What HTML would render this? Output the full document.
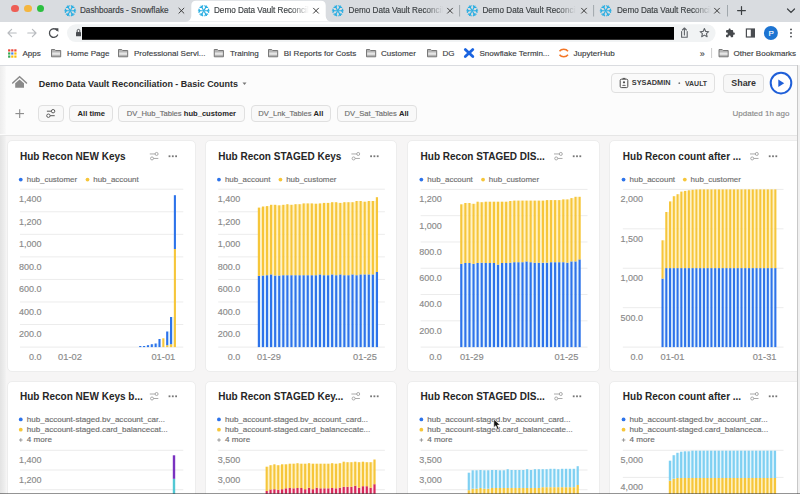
<!DOCTYPE html>
<html><head><meta charset="utf-8"><style>
html,body{margin:0;padding:0}
body{width:800px;height:494px;overflow:hidden;position:relative;background:#fff;font-family:"Liberation Sans",sans-serif}
.r,.t{position:absolute}
.t{white-space:nowrap;-webkit-text-stroke:0.15px currentColor}
b{-webkit-text-stroke:0}
svg.r{overflow:visible}
</style></head><body>
<div class="r" style="left:0px;top:0px;width:800px;height:21.5px;background:#d9dce0;"></div>
<div class="r" style="left:11.3px;top:4.6px;width:7.8px;height:7.8px;border-radius:50%;background:#ee5e55"></div>
<div class="r" style="left:24px;top:4.6px;width:7.8px;height:7.8px;border-radius:50%;background:#f4b63f"></div>
<div class="r" style="left:36.7px;top:4.6px;width:7.8px;height:7.8px;border-radius:50%;background:#2bbf40"></div>
<svg class="r" style="left:0;top:0" width="800" height="22"><path d="M185,21.5 Q191,21.5 191.3,16 L191.3,5.5 Q191.3,0.8 196,0.8 L321,0.8 Q325.7,0.8 325.7,5.5 L325.7,16 Q326,21.5 332,21.5 Z" fill="#fff"/></svg>
<svg class="r" style="left:0;top:0" width="800" height="22"><g stroke="#2aaee2" stroke-width="1.2" stroke-linecap="round"><line x1="71.40" y1="10.75" x2="75.60" y2="10.75"/><line x1="74.20" y1="10.75" x2="75.11" y2="9.16"/><line x1="74.20" y1="10.75" x2="75.11" y2="12.34"/><line x1="70.80" y1="11.79" x2="72.90" y2="15.43"/><line x1="72.20" y1="14.21" x2="74.03" y2="14.21"/><line x1="72.20" y1="14.21" x2="71.28" y2="15.80"/><line x1="69.60" y1="11.79" x2="67.50" y2="15.43"/><line x1="68.20" y1="14.21" x2="69.12" y2="15.80"/><line x1="68.20" y1="14.21" x2="66.37" y2="14.21"/><line x1="69.00" y1="10.75" x2="64.80" y2="10.75"/><line x1="66.20" y1="10.75" x2="65.29" y2="12.34"/><line x1="66.20" y1="10.75" x2="65.29" y2="9.16"/><line x1="69.60" y1="9.71" x2="67.50" y2="6.07"/><line x1="68.20" y1="7.29" x2="66.37" y2="7.29"/><line x1="68.20" y1="7.29" x2="69.12" y2="5.70"/><line x1="70.80" y1="9.71" x2="72.90" y2="6.07"/><line x1="72.20" y1="7.29" x2="71.28" y2="5.70"/><line x1="72.20" y1="7.29" x2="74.03" y2="7.29"/></g><circle cx="70.2" cy="10.75" r="0.9" fill="#2aaee2"/><g stroke="#3c3c3c" stroke-width="1" stroke-linecap="round"><line x1="178.9" y1="8.2" x2="183.9" y2="13.2"/><line x1="183.9" y1="8.2" x2="178.9" y2="13.2"/></g><g stroke="#2aaee2" stroke-width="1.2" stroke-linecap="round"><line x1="205.00" y1="10.75" x2="209.20" y2="10.75"/><line x1="207.80" y1="10.75" x2="208.71" y2="9.16"/><line x1="207.80" y1="10.75" x2="208.71" y2="12.34"/><line x1="204.40" y1="11.79" x2="206.50" y2="15.43"/><line x1="205.80" y1="14.21" x2="207.63" y2="14.21"/><line x1="205.80" y1="14.21" x2="204.88" y2="15.80"/><line x1="203.20" y1="11.79" x2="201.10" y2="15.43"/><line x1="201.80" y1="14.21" x2="202.72" y2="15.80"/><line x1="201.80" y1="14.21" x2="199.97" y2="14.21"/><line x1="202.60" y1="10.75" x2="198.40" y2="10.75"/><line x1="199.80" y1="10.75" x2="198.89" y2="12.34"/><line x1="199.80" y1="10.75" x2="198.89" y2="9.16"/><line x1="203.20" y1="9.71" x2="201.10" y2="6.07"/><line x1="201.80" y1="7.29" x2="199.97" y2="7.29"/><line x1="201.80" y1="7.29" x2="202.72" y2="5.70"/><line x1="204.40" y1="9.71" x2="206.50" y2="6.07"/><line x1="205.80" y1="7.29" x2="204.88" y2="5.70"/><line x1="205.80" y1="7.29" x2="207.63" y2="7.29"/></g><circle cx="203.79999999999998" cy="10.75" r="0.9" fill="#2aaee2"/><g stroke="#3c3c3c" stroke-width="1" stroke-linecap="round"><line x1="313.5" y1="8.2" x2="318.5" y2="13.2"/><line x1="318.5" y1="8.2" x2="313.5" y2="13.2"/></g><g stroke="#2aaee2" stroke-width="1.2" stroke-linecap="round"><line x1="339.00" y1="10.75" x2="343.20" y2="10.75"/><line x1="341.80" y1="10.75" x2="342.71" y2="9.16"/><line x1="341.80" y1="10.75" x2="342.71" y2="12.34"/><line x1="338.40" y1="11.79" x2="340.50" y2="15.43"/><line x1="339.80" y1="14.21" x2="341.63" y2="14.21"/><line x1="339.80" y1="14.21" x2="338.88" y2="15.80"/><line x1="337.20" y1="11.79" x2="335.10" y2="15.43"/><line x1="335.80" y1="14.21" x2="336.72" y2="15.80"/><line x1="335.80" y1="14.21" x2="333.97" y2="14.21"/><line x1="336.60" y1="10.75" x2="332.40" y2="10.75"/><line x1="333.80" y1="10.75" x2="332.89" y2="12.34"/><line x1="333.80" y1="10.75" x2="332.89" y2="9.16"/><line x1="337.20" y1="9.71" x2="335.10" y2="6.07"/><line x1="335.80" y1="7.29" x2="333.97" y2="7.29"/><line x1="335.80" y1="7.29" x2="336.72" y2="5.70"/><line x1="338.40" y1="9.71" x2="340.50" y2="6.07"/><line x1="339.80" y1="7.29" x2="338.88" y2="5.70"/><line x1="339.80" y1="7.29" x2="341.63" y2="7.29"/></g><circle cx="337.8" cy="10.75" r="0.9" fill="#2aaee2"/><g stroke="#3c3c3c" stroke-width="1" stroke-linecap="round"><line x1="447.5" y1="8.2" x2="452.5" y2="13.2"/><line x1="452.5" y1="8.2" x2="447.5" y2="13.2"/></g><g stroke="#2aaee2" stroke-width="1.2" stroke-linecap="round"><line x1="473.40" y1="10.75" x2="477.60" y2="10.75"/><line x1="476.20" y1="10.75" x2="477.11" y2="9.16"/><line x1="476.20" y1="10.75" x2="477.11" y2="12.34"/><line x1="472.80" y1="11.79" x2="474.90" y2="15.43"/><line x1="474.20" y1="14.21" x2="476.03" y2="14.21"/><line x1="474.20" y1="14.21" x2="473.28" y2="15.80"/><line x1="471.60" y1="11.79" x2="469.50" y2="15.43"/><line x1="470.20" y1="14.21" x2="471.12" y2="15.80"/><line x1="470.20" y1="14.21" x2="468.37" y2="14.21"/><line x1="471.00" y1="10.75" x2="466.80" y2="10.75"/><line x1="468.20" y1="10.75" x2="467.29" y2="12.34"/><line x1="468.20" y1="10.75" x2="467.29" y2="9.16"/><line x1="471.60" y1="9.71" x2="469.50" y2="6.07"/><line x1="470.20" y1="7.29" x2="468.37" y2="7.29"/><line x1="470.20" y1="7.29" x2="471.12" y2="5.70"/><line x1="472.80" y1="9.71" x2="474.90" y2="6.07"/><line x1="474.20" y1="7.29" x2="473.28" y2="5.70"/><line x1="474.20" y1="7.29" x2="476.03" y2="7.29"/></g><circle cx="472.2" cy="10.75" r="0.9" fill="#2aaee2"/><g stroke="#3c3c3c" stroke-width="1" stroke-linecap="round"><line x1="581.5" y1="8.2" x2="586.5" y2="13.2"/><line x1="586.5" y1="8.2" x2="581.5" y2="13.2"/></g><g stroke="#2aaee2" stroke-width="1.2" stroke-linecap="round"><line x1="606.90" y1="10.75" x2="611.10" y2="10.75"/><line x1="609.70" y1="10.75" x2="610.61" y2="9.16"/><line x1="609.70" y1="10.75" x2="610.61" y2="12.34"/><line x1="606.30" y1="11.79" x2="608.40" y2="15.43"/><line x1="607.70" y1="14.21" x2="609.53" y2="14.21"/><line x1="607.70" y1="14.21" x2="606.78" y2="15.80"/><line x1="605.10" y1="11.79" x2="603.00" y2="15.43"/><line x1="603.70" y1="14.21" x2="604.62" y2="15.80"/><line x1="603.70" y1="14.21" x2="601.87" y2="14.21"/><line x1="604.50" y1="10.75" x2="600.30" y2="10.75"/><line x1="601.70" y1="10.75" x2="600.79" y2="12.34"/><line x1="601.70" y1="10.75" x2="600.79" y2="9.16"/><line x1="605.10" y1="9.71" x2="603.00" y2="6.07"/><line x1="603.70" y1="7.29" x2="601.87" y2="7.29"/><line x1="603.70" y1="7.29" x2="604.62" y2="5.70"/><line x1="606.30" y1="9.71" x2="608.40" y2="6.07"/><line x1="607.70" y1="7.29" x2="606.78" y2="5.70"/><line x1="607.70" y1="7.29" x2="609.53" y2="7.29"/></g><circle cx="605.7" cy="10.75" r="0.9" fill="#2aaee2"/><g stroke="#3c3c3c" stroke-width="1" stroke-linecap="round"><line x1="714.5" y1="8.2" x2="719.5" y2="13.2"/><line x1="719.5" y1="8.2" x2="714.5" y2="13.2"/></g><line x1="459.6" y1="5" x2="459.6" y2="16.5" stroke="#9aa0a6" stroke-width="0.9"/><line x1="593.6" y1="5" x2="593.6" y2="16.5" stroke="#9aa0a6" stroke-width="0.9"/><line x1="727.5" y1="5" x2="727.5" y2="16.5" stroke="#9aa0a6" stroke-width="0.9"/><g stroke="#3c4043" stroke-width="1.2" stroke-linecap="round"><line x1="737.6" y1="10.6" x2="745.4" y2="10.6"/><line x1="741.5" y1="6.7" x2="741.5" y2="14.5"/></g><path d="M787.5,9 L791,12.5 L794.5,9" fill="none" stroke="#3c4043" stroke-width="1.2" stroke-linecap="round"/></svg>
<div class="t" style="left:80px;top:6.11px;font-size:8.15px;line-height:9.78px;color:#3c4043;font-weight:normal;">Dashboards - Snowflake</div>
<div class="t" style="left:214px;top:5.9px;width:95px;overflow:hidden;font-size:8.15px;line-height:10.2px;color:#3c4043;-webkit-mask-image:linear-gradient(90deg,#000 80%,transparent 100%)">Demo Data Vault Reconciliation</div>
<div class="t" style="left:348.6px;top:5.9px;width:94px;overflow:hidden;font-size:8.15px;line-height:10.2px;color:#3c4043;-webkit-mask-image:linear-gradient(90deg,#000 80%,transparent 100%)">Demo Data Vault Reconciliation</div>
<div class="t" style="left:482.4px;top:5.9px;width:94px;overflow:hidden;font-size:8.15px;line-height:10.2px;color:#3c4043;-webkit-mask-image:linear-gradient(90deg,#000 80%,transparent 100%)">Demo Data Vault Reconciliation</div>
<div class="t" style="left:617px;top:5.9px;width:94px;overflow:hidden;font-size:8.15px;line-height:10.2px;color:#3c4043;-webkit-mask-image:linear-gradient(90deg,#000 80%,transparent 100%)">Demo Data Vault Reconciliation</div>
<div class="r" style="left:0px;top:21.5px;width:800px;height:43px;background:#ffffff;"></div>
<svg class="r" style="left:0;top:0" width="800" height="66"><g fill="none" stroke="#b8bbbf" stroke-width="1.2" stroke-linecap="round" stroke-linejoin="round"><path d="M16.2,33 L8,33 M11.6,29.4 L8,33 L11.6,36.6"/><path d="M27.8,33 L36,33 M32.4,29.4 L36,33 L32.4,36.6"/></g><g fill="none" stroke="#4a4d51" stroke-width="1.3" stroke-linecap="round"><path d="M57,30.2 A4.3,4.3 0 1 0 57.6,35"/></g><path d="M54.6,28.2 L58.4,28.2 L58.4,32 Z" fill="#4a4d51"/><rect x="67" y="24.2" width="648.6" height="17.8" rx="8.9" fill="#f1f3f4"/><rect x="76" y="32" width="5" height="4.3" rx="0.6" fill="#4a4d51"/><path d="M77.2,32 V30.7 A1.3,1.3 0 0 1 79.8,30.7 V32" fill="none" stroke="#4a4d51" stroke-width="1"/><rect x="82" y="27" width="592" height="12.8" fill="#000"/><g fill="none" stroke="#5f6368" stroke-width="1.1" stroke-linecap="round" stroke-linejoin="round"><path d="M681.6,31.5 V37.2 H687.2 V31.5"/><path d="M684.4,35 V28 M682.4,30 L684.4,28 L686.4,30"/></g><path d="M704.4,28.6 L705.7,31.4 L708.7,31.7 L706.4,33.7 L707.1,36.7 L704.4,35.1 L701.7,36.7 L702.4,33.7 L700.1,31.7 L703.1,31.4 Z" fill="none" stroke="#5f6368" stroke-width="1.1" stroke-linejoin="round"/><g transform="translate(725.2,28) scale(0.42)"><path d="M20.5 11H19V7c0-1.1-.9-2-2-2h-4V3.5C13 2.12 11.88 1 10.5 1S8 2.12 8 3.5V5H4c-1.1 0-1.99.9-1.99 2v3.8H3.5c1.49 0 2.7 1.21 2.7 2.7s-1.21 2.7-2.7 2.7H2V20c0 1.1.9 2 2 2h3.8v-1.5c0-1.49 1.210-2.7 2.7-2.7 1.49 0 2.7 1.21 2.7 2.7V22H17c1.1 0 2-.9 2-2v-4h1.5c1.38 0 2.5-1.12 2.5-2.5S21.88 11 20.5 11z" fill="#45484c"/></g><rect x="746.4" y="29" width="8" height="8" fill="none" stroke="#4a4d51" stroke-width="1.2"/><rect x="750.8" y="29" width="3.6" height="8" fill="#4a4d51"/><circle cx="770.9" cy="33" r="7" fill="#1d74d2"/><g fill="#4a4d51"><circle cx="791" cy="29.4" r="0.95"/><circle cx="791" cy="33" r="0.95"/><circle cx="791" cy="36.6" r="0.95"/></g></svg>
<div class="t" style="left:768.4px;top:28.6px;font-size:8px;line-height:9.6px;color:#fff;font-weight:normal;">P</div>
<div class="r" style="left:0px;top:64.8px;width:800px;height:1px;background:#dadce0;"></div>
<svg class="r" style="left:0;top:0" width="800" height="66"><rect x="8.10" y="49.30" width="2.2" height="2.2" fill="#ea4335"/><rect x="11.20" y="49.30" width="2.2" height="2.2" fill="#ea4335"/><rect x="14.30" y="49.30" width="2.2" height="2.2" fill="#ea4335"/><rect x="8.10" y="52.40" width="2.2" height="2.2" fill="#34a853"/><rect x="11.20" y="52.40" width="2.2" height="2.2" fill="#4285f4"/><rect x="14.30" y="52.40" width="2.2" height="2.2" fill="#fbbc05"/><rect x="8.10" y="55.50" width="2.2" height="2.2" fill="#34a853"/><rect x="11.20" y="55.50" width="2.2" height="2.2" fill="#fbbc05"/><rect x="14.30" y="55.50" width="2.2" height="2.2" fill="#fbbc05"/><path d="M51.5,49.5 h3.2 l1,1 h5 v6.3 h-9.2 Z" fill="#b4b4b4" stroke="#6e6e6e" stroke-width="0.9" stroke-linejoin="round"/><rect x="52.2" y="52.5" width="7.8" height="2.3" fill="#e6e6e6"/><path d="M118.5,49.5 h3.2 l1,1 h5 v6.3 h-9.2 Z" fill="#b4b4b4" stroke="#6e6e6e" stroke-width="0.9" stroke-linejoin="round"/><rect x="119.2" y="52.5" width="7.8" height="2.3" fill="#e6e6e6"/><path d="M214.25,49.5 h3.2 l1,1 h5 v6.3 h-9.2 Z" fill="#b4b4b4" stroke="#6e6e6e" stroke-width="0.9" stroke-linejoin="round"/><rect x="214.95" y="52.5" width="7.8" height="2.3" fill="#e6e6e6"/><path d="M268.5,49.5 h3.2 l1,1 h5 v6.3 h-9.2 Z" fill="#b4b4b4" stroke="#6e6e6e" stroke-width="0.9" stroke-linejoin="round"/><rect x="269.2" y="52.5" width="7.8" height="2.3" fill="#e6e6e6"/><path d="M366.5,49.5 h3.2 l1,1 h5 v6.3 h-9.2 Z" fill="#b4b4b4" stroke="#6e6e6e" stroke-width="0.9" stroke-linejoin="round"/><rect x="367.2" y="52.5" width="7.8" height="2.3" fill="#e6e6e6"/><path d="M427.5,49.5 h3.2 l1,1 h5 v6.3 h-9.2 Z" fill="#b4b4b4" stroke="#6e6e6e" stroke-width="0.9" stroke-linejoin="round"/><rect x="428.2" y="52.5" width="7.8" height="2.3" fill="#e6e6e6"/><path d="M719.0,49.5 h3.2 l1,1 h5 v6.3 h-9.2 Z" fill="#b4b4b4" stroke="#6e6e6e" stroke-width="0.9" stroke-linejoin="round"/><rect x="719.7" y="52.5" width="7.8" height="2.3" fill="#e6e6e6"/><g stroke="#1a64e0" stroke-width="2.8" stroke-linecap="round"><line x1="465.3" y1="49.6" x2="472.8" y2="56.6"/><line x1="472.8" y1="49.6" x2="465.3" y2="56.6"/></g><path d="M559.5,51.2 A5,4 0 0 1 568,51.2" fill="none" stroke="#f37626" stroke-width="1.5"/><path d="M559.5,54.8 A5,4 0 0 0 568,54.8" fill="none" stroke="#f37626" stroke-width="1.5"/><line x1="711.6" y1="48" x2="711.6" y2="58" stroke="#c6c6c6" stroke-width="0.9"/></svg>
<div class="t" style="left:22.5px;top:48.97px;font-size:8.05px;line-height:9.66px;color:#3c4043;font-weight:normal;">Apps</div>
<div class="t" style="left:67px;top:48.97px;font-size:8.05px;line-height:9.66px;color:#3c4043;font-weight:normal;">Home Page</div>
<div class="t" style="left:134px;top:48.97px;font-size:8.05px;line-height:9.66px;color:#3c4043;font-weight:normal;">Professional Servi...</div>
<div class="t" style="left:230px;top:48.97px;font-size:8.05px;line-height:9.66px;color:#3c4043;font-weight:normal;">Training</div>
<div class="t" style="left:283.75px;top:48.97px;font-size:8.05px;line-height:9.66px;color:#3c4043;font-weight:normal;">BI Reports for Costs</div>
<div class="t" style="left:381px;top:48.97px;font-size:8.05px;line-height:9.66px;color:#3c4043;font-weight:normal;">Customer</div>
<div class="t" style="left:442.5px;top:48.97px;font-size:8.05px;line-height:9.66px;color:#3c4043;font-weight:normal;">DG</div>
<div class="t" style="left:479.5px;top:48.97px;font-size:8.05px;line-height:9.66px;color:#3c4043;font-weight:normal;">Snowflake Termin...</div>
<div class="t" style="left:573.5px;top:48.97px;font-size:8.05px;line-height:9.66px;color:#3c4043;font-weight:normal;">JupyterHub</div>
<div class="t" style="left:733.5px;top:48.97px;font-size:8.05px;line-height:9.66px;color:#3c4043;font-weight:normal;">Other Bookmarks</div>
<div class="t" style="left:699.8px;top:48.6px;font-size:9px;line-height:10.8px;color:#3c4043;font-weight:normal;">»</div>
<div class="r" style="left:0px;top:65.8px;width:800px;height:68.9px;background:#fcfcfc;"></div>
<div class="r" style="left:0px;top:134.5px;width:797px;height:1.2px;background:#e6e6e6;"></div>
<div class="r" style="left:0px;top:135.7px;width:797px;height:358.3px;background:#f6f5f5;"></div>
<svg class="r" style="left:0;top:0" width="800" height="140"><path d="M12.7,83 L19.6,76.7 L26.5,83" fill="none" stroke="#8a8a8a" stroke-width="1.5" stroke-linecap="round"/><path d="M15.2,83.3 L19.6,79.4 L24,83.3 V87.7 H15.2 Z" fill="#8a8a8a"/><path d="M242.5,82.5 L246.5,82.5 L244.5,85 Z" fill="#777"/><g stroke="#8a8a8a" stroke-width="1.1"><line x1="15.4" y1="113.6" x2="24" y2="113.6"/><line x1="19.7" y1="109.3" x2="19.7" y2="117.9"/></g></svg>
<div class="t" style="left:38.8px;top:79.03px;font-size:8.95px;line-height:10.74px;color:#2a2a2a;font-weight:bold;-webkit-text-stroke:0;">Demo Data Vault Reconciliation - Basic Counts</div>
<div class="r" style="left:611.4px;top:73.4px;width:103.6px;height:19.3px;background:#fafafa;border:1px solid #e0e0e0;box-sizing:border-box;border-radius:4px"></div>
<div class="r" style="left:723.3px;top:73.6px;width:40.3px;height:19.5px;background:#f7f7f7;border:1px solid #e0e0e0;box-sizing:border-box;border-radius:4px"></div>
<svg class="r" style="left:0;top:0" width="800" height="140"><rect x="620.2" y="79.2" width="7.6" height="8.4" rx="1.2" fill="none" stroke="#4a4a4a" stroke-width="1"/><line x1="622.6" y1="78.4" x2="625.4" y2="78.4" stroke="#4a4a4a" stroke-width="1"/><circle cx="624" cy="82.3" r="1.1" fill="#4a4a4a"/><path d="M621.9,85.8 Q624,83.9 626.1,85.8" fill="#4a4a4a"/><circle cx="679.3" cy="83.2" r="0.9" fill="#777"/><circle cx="781" cy="83.1" r="10.3" fill="#fff" stroke="#1f5fd8" stroke-width="2"/><path d="M778.3,79.6 L784.2,83.3 L778.3,87 Z" fill="#1f5fd8"/></svg>
<div class="t" style="left:631.8px;top:79.39px;font-size:7.35px;line-height:8.82px;color:#3a3a3a;font-weight:bold;-webkit-text-stroke:0;">SYSADMIN</div>
<div class="t" style="left:685px;top:79.63px;font-size:6.95px;line-height:8.34px;color:#3a3a3a;font-weight:bold;-webkit-text-stroke:0;">VAULT</div>
<div class="t" style="left:731.3px;top:78.46px;font-size:8.9px;line-height:10.68px;color:#333;font-weight:bold;-webkit-text-stroke:0;">Share</div>
<div class="r" style="left:37.5px;top:105px;width:26.3px;height:17.4px;background:#f9f9f9;border:1px solid #e0e0e0;box-sizing:border-box;border-radius:4px"></div>
<div class="r" style="left:69.4px;top:105px;width:44.1px;height:17.4px;background:#f9f9f9;border:1px solid #e0e0e0;box-sizing:border-box;border-radius:4px"></div>
<div class="r" style="left:118px;top:105px;width:126.5px;height:17.4px;background:#f9f9f9;border:1px solid #e0e0e0;box-sizing:border-box;border-radius:4px"></div>
<div class="r" style="left:250.5px;top:105px;width:80.25px;height:17.4px;background:#f9f9f9;border:1px solid #e0e0e0;box-sizing:border-box;border-radius:4px"></div>
<div class="r" style="left:336.75px;top:105px;width:80px;height:17.4px;background:#f9f9f9;border:1px solid #e0e0e0;box-sizing:border-box;border-radius:4px"></div>
<svg class="r" style="left:0;top:0" width="800" height="140"><g fill="none" stroke="#5a5a5a" stroke-width="1"><line x1="46.9" y1="111.2" x2="51.4" y2="111.2"/><circle cx="53.1" cy="111.2" r="1.7" fill="#fff"/><line x1="50.1" y1="115.7" x2="54.7" y2="115.7"/><circle cx="48.4" cy="115.7" r="1.7" fill="#fff"/></g></svg>
<div class="t" style="left:77.6px;top:109.24px;font-size:7.6px;line-height:9.12px;color:#262626;font-weight:bold;-webkit-text-stroke:0;">All time</div>
<div class="t" style="left:126.75px;top:109.2px;font-size:7.6px;line-height:9.2px;color:#6e6e6e">DV_Hub_Tables <b style="color:#262626">hub_customer</b></div>
<div class="t" style="left:258.25px;top:109.2px;font-size:7.6px;line-height:9.2px;color:#6e6e6e">DV_Lnk_Tables <b style="color:#262626">All</b></div>
<div class="t" style="left:344.5px;top:109.2px;font-size:7.6px;line-height:9.2px;color:#6e6e6e">DV_Sat_Tables <b style="color:#262626">All</b></div>
<div class="t" style="left:732.5px;top:109.2px;font-size:8px;line-height:9.6px;color:#8a8a8a;font-weight:normal;">Updated 1h ago</div>
<div class="r" style="left:6.5px;top:140.4px;width:189.3px;height:231.6px;background:#fff;border:1px solid #ededed;box-sizing:border-box;border-radius:5px"></div>
<div class="r" style="left:204.7px;top:140.4px;width:192.7px;height:231.6px;background:#fff;border:1px solid #ededed;box-sizing:border-box;border-radius:5px"></div>
<div class="r" style="left:407.1px;top:140.4px;width:192.9px;height:231.6px;background:#fff;border:1px solid #ededed;box-sizing:border-box;border-radius:5px"></div>
<div class="r" style="left:609.3px;top:140.4px;width:196.7px;height:231.6px;background:#fff;border:1px solid #ededed;box-sizing:border-box;border-radius:5px"></div>
<div class="t" style="left:20px;top:151.25px;font-size:10px;line-height:12px;color:#262626;font-weight:bold;-webkit-text-stroke:0;">Hub Recon NEW Keys</div>
<svg class="r" style="left:0;top:0" width="800" height="494"><g fill="none" stroke="#a0a0a0" stroke-width="0.9"><line x1="149.8" y1="153.95" x2="155.8" y2="153.95"/><circle cx="156.60000000000002" cy="153.95" r="1.5" fill="#fff"/><line x1="151.8" y1="158.45" x2="158.3" y2="158.45"/><circle cx="152.0" cy="158.45" r="1.5" fill="#fff"/></g><g fill="#777"><rect x="168.60000000000002" y="155.35" width="1.8" height="1.8"/><rect x="171.9" y="155.35" width="1.8" height="1.8"/><rect x="175.20000000000002" y="155.35" width="1.8" height="1.8"/></g></svg>
<div class="t" style="left:218.2px;top:151.25px;font-size:10px;line-height:12px;color:#262626;font-weight:bold;-webkit-text-stroke:0;">Hub Recon STAGED Keys</div>
<svg class="r" style="left:0;top:0" width="800" height="494"><g fill="none" stroke="#a0a0a0" stroke-width="0.9"><line x1="351.4" y1="153.95" x2="357.4" y2="153.95"/><circle cx="358.2" cy="153.95" r="1.5" fill="#fff"/><line x1="353.4" y1="158.45" x2="359.9" y2="158.45"/><circle cx="353.59999999999997" cy="158.45" r="1.5" fill="#fff"/></g><g fill="#777"><rect x="370.2" y="155.35" width="1.8" height="1.8"/><rect x="373.5" y="155.35" width="1.8" height="1.8"/><rect x="376.79999999999995" y="155.35" width="1.8" height="1.8"/></g></svg>
<div class="t" style="left:420.6px;top:151.25px;font-size:10px;line-height:12px;color:#262626;font-weight:bold;-webkit-text-stroke:0;">Hub Recon STAGED DIS...</div>
<svg class="r" style="left:0;top:0" width="800" height="494"><g fill="none" stroke="#a0a0a0" stroke-width="0.9"><line x1="554.0" y1="153.95" x2="560.0" y2="153.95"/><circle cx="560.8" cy="153.95" r="1.5" fill="#fff"/><line x1="556.0" y1="158.45" x2="562.5" y2="158.45"/><circle cx="556.2" cy="158.45" r="1.5" fill="#fff"/></g><g fill="#777"><rect x="572.8" y="155.35" width="1.8" height="1.8"/><rect x="576.1" y="155.35" width="1.8" height="1.8"/><rect x="579.4" y="155.35" width="1.8" height="1.8"/></g></svg>
<div class="t" style="left:622.8px;top:151.25px;font-size:10px;line-height:12px;color:#262626;font-weight:bold;-webkit-text-stroke:0;">Hub Recon count after ...</div>
<svg class="r" style="left:0;top:0" width="800" height="494"><g fill="none" stroke="#a0a0a0" stroke-width="0.9"><line x1="750.0" y1="153.95" x2="756.0" y2="153.95"/><circle cx="756.8" cy="153.95" r="1.5" fill="#fff"/><line x1="752.0" y1="158.45" x2="758.5" y2="158.45"/><circle cx="752.2" cy="158.45" r="1.5" fill="#fff"/></g><g fill="#777"><rect x="768.8" y="155.35" width="1.8" height="1.8"/><rect x="772.1" y="155.35" width="1.8" height="1.8"/><rect x="775.4" y="155.35" width="1.8" height="1.8"/></g></svg>
<svg class="r" style="left:0;top:0" width="800" height="494"><circle cx="20.75" cy="179.6" r="1.9" fill="#2d73ea"/><circle cx="87.5" cy="179.6" r="1.9" fill="#f6c63a"/></svg>
<div class="t" style="left:26.75px;top:174.83px;font-size:7.95px;line-height:9.54px;color:#6e6e6e;font-weight:normal;">hub_customer</div>
<div class="t" style="left:93.25px;top:174.83px;font-size:7.95px;line-height:9.54px;color:#6e6e6e;font-weight:normal;">hub_account</div>
<svg class="r" style="left:0;top:0" width="800" height="494"><circle cx="218.95" cy="179.6" r="1.9" fill="#2d73ea"/><circle cx="280.45" cy="179.6" r="1.9" fill="#f6c63a"/></svg>
<div class="t" style="left:224.95px;top:174.83px;font-size:7.95px;line-height:9.54px;color:#6e6e6e;font-weight:normal;">hub_account</div>
<div class="t" style="left:286.2px;top:174.83px;font-size:7.95px;line-height:9.54px;color:#6e6e6e;font-weight:normal;">hub_customer</div>
<svg class="r" style="left:0;top:0" width="800" height="494"><circle cx="421.35" cy="179.6" r="1.9" fill="#2d73ea"/><circle cx="483.05" cy="179.6" r="1.9" fill="#f6c63a"/></svg>
<div class="t" style="left:427.35px;top:174.83px;font-size:7.95px;line-height:9.54px;color:#6e6e6e;font-weight:normal;">hub_account</div>
<div class="t" style="left:488.8px;top:174.83px;font-size:7.95px;line-height:9.54px;color:#6e6e6e;font-weight:normal;">hub_customer</div>
<svg class="r" style="left:0;top:0" width="800" height="494"><circle cx="623.55" cy="179.6" r="1.9" fill="#2d73ea"/><circle cx="684.8" cy="179.6" r="1.9" fill="#f6c63a"/></svg>
<div class="t" style="left:629.55px;top:174.83px;font-size:7.95px;line-height:9.54px;color:#6e6e6e;font-weight:normal;">hub_account</div>
<div class="t" style="left:690.55px;top:174.83px;font-size:7.95px;line-height:9.54px;color:#6e6e6e;font-weight:normal;">hub_customer</div>
<svg class="r" style="left:0;top:0" width="800" height="494"><rect x="20.0" y="188.7" width="163.3" height="1" fill="#ececec"/><rect x="20.0" y="211.25714285714284" width="163.3" height="1" fill="#ececec"/><rect x="20.0" y="233.81428571428572" width="163.3" height="1" fill="#ececec"/><rect x="20.0" y="256.37142857142857" width="163.3" height="1" fill="#ececec"/><rect x="20.0" y="278.92857142857144" width="163.3" height="1" fill="#ececec"/><rect x="20.0" y="301.4857142857143" width="163.3" height="1" fill="#ececec"/><rect x="20.0" y="324.0428571428572" width="163.3" height="1" fill="#ececec"/><rect x="20.0" y="346.6" width="163.3" height="1" fill="#ececec"/></svg>
<div class="t" style="left:1.6px;width:40px;text-align:right;top:194.1px;font-size:9px;line-height:10.8px;color:#8a8a8a">1,400</div>
<div class="t" style="left:1.6px;width:40px;text-align:right;top:216.66px;font-size:9px;line-height:10.8px;color:#8a8a8a">1,200</div>
<div class="t" style="left:1.6px;width:40px;text-align:right;top:239.21px;font-size:9px;line-height:10.8px;color:#8a8a8a">1,000</div>
<div class="t" style="left:1.6px;width:40px;text-align:right;top:261.77px;font-size:9px;line-height:10.8px;color:#8a8a8a">800.0</div>
<div class="t" style="left:1.6px;width:40px;text-align:right;top:284.33px;font-size:9px;line-height:10.8px;color:#8a8a8a">600.0</div>
<div class="t" style="left:1.6px;width:40px;text-align:right;top:306.89px;font-size:9px;line-height:10.8px;color:#8a8a8a">400.0</div>
<div class="t" style="left:1.6px;width:40px;text-align:right;top:329.44px;font-size:9px;line-height:10.8px;color:#8a8a8a">200.0</div>
<div class="t" style="left:1.6px;width:40px;text-align:right;top:352px;font-size:9px;line-height:10.8px;color:#8a8a8a">0.0</div>
<svg class="r" style="left:0;top:0" width="800" height="494"><rect x="218.2" y="188.7" width="166.7" height="1" fill="#ececec"/><rect x="218.2" y="211.25714285714284" width="166.7" height="1" fill="#ececec"/><rect x="218.2" y="233.81428571428572" width="166.7" height="1" fill="#ececec"/><rect x="218.2" y="256.37142857142857" width="166.7" height="1" fill="#ececec"/><rect x="218.2" y="278.92857142857144" width="166.7" height="1" fill="#ececec"/><rect x="218.2" y="301.4857142857143" width="166.7" height="1" fill="#ececec"/><rect x="218.2" y="324.0428571428572" width="166.7" height="1" fill="#ececec"/><rect x="218.2" y="346.6" width="166.7" height="1" fill="#ececec"/></svg>
<div class="t" style="left:200.2px;width:40px;text-align:right;top:194.1px;font-size:9px;line-height:10.8px;color:#8a8a8a">1,400</div>
<div class="t" style="left:200.2px;width:40px;text-align:right;top:216.66px;font-size:9px;line-height:10.8px;color:#8a8a8a">1,200</div>
<div class="t" style="left:200.2px;width:40px;text-align:right;top:239.21px;font-size:9px;line-height:10.8px;color:#8a8a8a">1,000</div>
<div class="t" style="left:200.2px;width:40px;text-align:right;top:261.77px;font-size:9px;line-height:10.8px;color:#8a8a8a">800.0</div>
<div class="t" style="left:200.2px;width:40px;text-align:right;top:284.33px;font-size:9px;line-height:10.8px;color:#8a8a8a">600.0</div>
<div class="t" style="left:200.2px;width:40px;text-align:right;top:306.89px;font-size:9px;line-height:10.8px;color:#8a8a8a">400.0</div>
<div class="t" style="left:200.2px;width:40px;text-align:right;top:329.44px;font-size:9px;line-height:10.8px;color:#8a8a8a">200.0</div>
<div class="t" style="left:200.2px;width:40px;text-align:right;top:352px;font-size:9px;line-height:10.8px;color:#8a8a8a">0.0</div>
<svg class="r" style="left:0;top:0" width="800" height="494"><rect x="420.6" y="188.9" width="166.89999999999998" height="1" fill="#ececec"/><rect x="420.6" y="215.18333333333334" width="166.89999999999998" height="1" fill="#ececec"/><rect x="420.6" y="241.46666666666667" width="166.89999999999998" height="1" fill="#ececec"/><rect x="420.6" y="267.75" width="166.89999999999998" height="1" fill="#ececec"/><rect x="420.6" y="294.03333333333336" width="166.89999999999998" height="1" fill="#ececec"/><rect x="420.6" y="320.3166666666667" width="166.89999999999998" height="1" fill="#ececec"/><rect x="420.6" y="346.6" width="166.89999999999998" height="1" fill="#ececec"/></svg>
<div class="t" style="left:401.8px;width:40px;text-align:right;top:194.3px;font-size:9px;line-height:10.8px;color:#8a8a8a">1,200</div>
<div class="t" style="left:401.8px;width:40px;text-align:right;top:220.58px;font-size:9px;line-height:10.8px;color:#8a8a8a">1,000</div>
<div class="t" style="left:401.8px;width:40px;text-align:right;top:246.87px;font-size:9px;line-height:10.8px;color:#8a8a8a">800.0</div>
<div class="t" style="left:401.8px;width:40px;text-align:right;top:273.15px;font-size:9px;line-height:10.8px;color:#8a8a8a">600.0</div>
<div class="t" style="left:401.8px;width:40px;text-align:right;top:299.43px;font-size:9px;line-height:10.8px;color:#8a8a8a">400.0</div>
<div class="t" style="left:401.8px;width:40px;text-align:right;top:325.72px;font-size:9px;line-height:10.8px;color:#8a8a8a">200.0</div>
<div class="t" style="left:401.8px;width:40px;text-align:right;top:352px;font-size:9px;line-height:10.8px;color:#8a8a8a">0.0</div>
<svg class="r" style="left:0;top:0" width="800" height="494"><rect x="622.8" y="188.9" width="160.70000000000005" height="1" fill="#ececec"/><rect x="622.8" y="228.32500000000002" width="160.70000000000005" height="1" fill="#ececec"/><rect x="622.8" y="267.75" width="160.70000000000005" height="1" fill="#ececec"/><rect x="622.8" y="307.175" width="160.70000000000005" height="1" fill="#ececec"/><rect x="622.8" y="346.6" width="160.70000000000005" height="1" fill="#ececec"/></svg>
<div class="t" style="left:603px;width:40px;text-align:right;top:194.3px;font-size:9px;line-height:10.8px;color:#8a8a8a">2,000</div>
<div class="t" style="left:603px;width:40px;text-align:right;top:233.73px;font-size:9px;line-height:10.8px;color:#8a8a8a">1,500</div>
<div class="t" style="left:603px;width:40px;text-align:right;top:273.15px;font-size:9px;line-height:10.8px;color:#8a8a8a">1,000</div>
<div class="t" style="left:603px;width:40px;text-align:right;top:312.58px;font-size:9px;line-height:10.8px;color:#8a8a8a">500.0</div>
<div class="t" style="left:603px;width:40px;text-align:right;top:352px;font-size:9px;line-height:10.8px;color:#8a8a8a">0.0</div>
<div class="t" style="left:50px;width:40px;text-align:center;top:352px;font-size:9.3px;line-height:11px;color:#8a8a8a">01-02</div>
<div class="t" style="left:143.35px;width:40px;text-align:center;top:352px;font-size:9.3px;line-height:11px;color:#8a8a8a">01-01</div>
<div class="t" style="left:249px;width:40px;text-align:center;top:352px;font-size:9.3px;line-height:11px;color:#8a8a8a">01-29</div>
<div class="t" style="left:345px;width:40px;text-align:center;top:352px;font-size:9.3px;line-height:11px;color:#8a8a8a">01-25</div>
<div class="t" style="left:451.8px;width:40px;text-align:center;top:352px;font-size:9.3px;line-height:11px;color:#8a8a8a">01-29</div>
<div class="t" style="left:546.5px;width:40px;text-align:center;top:352px;font-size:9.3px;line-height:11px;color:#8a8a8a">01-25</div>
<div class="t" style="left:652.5px;width:40px;text-align:center;top:352px;font-size:9.3px;line-height:11px;color:#8a8a8a">01-01</div>
<div class="t" style="left:744.6px;width:40px;text-align:center;top:352px;font-size:9.3px;line-height:11px;color:#8a8a8a">01-31</div>
<svg class="r" style="left:0;top:0" width="800" height="494"><rect x="141.30" y="346.00" width="1.75" height="1.10" fill="#e2f3fc"/><rect x="145.15" y="346.00" width="1.75" height="1.10" fill="#e2f3fc"/><rect x="149.00" y="345.20" width="1.75" height="1.90" fill="#e2f3fc"/><rect x="152.85" y="344.20" width="1.75" height="2.90" fill="#e2f3fc"/><rect x="156.70" y="343.50" width="1.75" height="3.60" fill="#e2f3fc"/><rect x="168.25" y="345.20" width="1.75" height="1.90" fill="#fff2c4"/><rect x="168.25" y="331.50" width="1.75" height="13.70" fill="#e2f3fc"/><rect x="172.10" y="344.20" width="1.75" height="2.90" fill="#fff2c4"/><rect x="172.10" y="317.00" width="1.75" height="27.20" fill="#e2f3fc"/><rect x="139.20" y="346.00" width="2.1" height="1.10" fill="#2d73ea"/><rect x="143.05" y="346.00" width="2.1" height="1.10" fill="#2d73ea"/><rect x="146.90" y="345.20" width="2.1" height="1.90" fill="#2d73ea"/><rect x="150.75" y="344.20" width="2.1" height="2.90" fill="#2d73ea"/><rect x="154.60" y="343.50" width="2.1" height="3.60" fill="#2d73ea"/><rect x="158.45" y="339.00" width="2.1" height="8.10" fill="#2d73ea"/><rect x="162.30" y="338.30" width="2.1" height="8.80" fill="#f6c63a"/><rect x="166.15" y="345.20" width="2.1" height="1.90" fill="#f6c63a"/><rect x="166.15" y="331.50" width="2.1" height="13.70" fill="#2d73ea"/><rect x="170.00" y="344.20" width="2.1" height="2.90" fill="#f6c63a"/><rect x="170.00" y="317.00" width="2.1" height="27.20" fill="#2d73ea"/><rect x="173.85" y="249.00" width="2.1" height="98.10" fill="#f6c63a"/><rect x="173.85" y="195.20" width="2.1" height="53.80" fill="#2d73ea"/></svg>
<svg class="r" style="left:0;top:0" width="800" height="494"><rect x="260.00" y="275.90" width="1.87" height="71.20" fill="#e2f3fc"/><rect x="260.00" y="207.60" width="1.87" height="68.30" fill="#fff2c4"/><rect x="264.07" y="275.50" width="1.87" height="71.60" fill="#e2f3fc"/><rect x="264.07" y="206.50" width="1.87" height="69.00" fill="#fff2c4"/><rect x="268.14" y="275.20" width="1.87" height="71.90" fill="#e2f3fc"/><rect x="268.14" y="206.10" width="1.87" height="69.10" fill="#fff2c4"/><rect x="272.21" y="275.50" width="1.87" height="71.60" fill="#e2f3fc"/><rect x="272.21" y="204.80" width="1.87" height="70.70" fill="#fff2c4"/><rect x="276.28" y="275.50" width="1.87" height="71.60" fill="#e2f3fc"/><rect x="276.28" y="205.30" width="1.87" height="70.20" fill="#fff2c4"/><rect x="280.35" y="275.50" width="1.87" height="71.60" fill="#e2f3fc"/><rect x="280.35" y="205.30" width="1.87" height="70.20" fill="#fff2c4"/><rect x="284.42" y="275.20" width="1.87" height="71.90" fill="#e2f3fc"/><rect x="284.42" y="204.80" width="1.87" height="70.40" fill="#fff2c4"/><rect x="288.49" y="275.20" width="1.87" height="71.90" fill="#e2f3fc"/><rect x="288.49" y="204.80" width="1.87" height="70.40" fill="#fff2c4"/><rect x="292.56" y="275.20" width="1.87" height="71.90" fill="#e2f3fc"/><rect x="292.56" y="204.80" width="1.87" height="70.40" fill="#fff2c4"/><rect x="296.63" y="275.20" width="1.87" height="71.90" fill="#e2f3fc"/><rect x="296.63" y="204.20" width="1.87" height="71.00" fill="#fff2c4"/><rect x="300.70" y="275.20" width="1.87" height="71.90" fill="#e2f3fc"/><rect x="300.70" y="204.20" width="1.87" height="71.00" fill="#fff2c4"/><rect x="304.77" y="275.20" width="1.87" height="71.90" fill="#e2f3fc"/><rect x="304.77" y="203.40" width="1.87" height="71.80" fill="#fff2c4"/><rect x="308.84" y="275.20" width="1.87" height="71.90" fill="#e2f3fc"/><rect x="308.84" y="203.40" width="1.87" height="71.80" fill="#fff2c4"/><rect x="312.91" y="275.20" width="1.87" height="71.90" fill="#e2f3fc"/><rect x="312.91" y="203.70" width="1.87" height="71.50" fill="#fff2c4"/><rect x="316.98" y="275.20" width="1.87" height="71.90" fill="#e2f3fc"/><rect x="316.98" y="203.70" width="1.87" height="71.50" fill="#fff2c4"/><rect x="321.05" y="275.20" width="1.87" height="71.90" fill="#e2f3fc"/><rect x="321.05" y="203.40" width="1.87" height="71.80" fill="#fff2c4"/><rect x="325.12" y="275.20" width="1.87" height="71.90" fill="#e2f3fc"/><rect x="325.12" y="202.90" width="1.87" height="72.30" fill="#fff2c4"/><rect x="329.19" y="275.20" width="1.87" height="71.90" fill="#e2f3fc"/><rect x="329.19" y="202.90" width="1.87" height="72.30" fill="#fff2c4"/><rect x="333.26" y="275.20" width="1.87" height="71.90" fill="#e2f3fc"/><rect x="333.26" y="202.20" width="1.87" height="73.00" fill="#fff2c4"/><rect x="337.33" y="275.20" width="1.87" height="71.90" fill="#e2f3fc"/><rect x="337.33" y="202.90" width="1.87" height="72.30" fill="#fff2c4"/><rect x="341.40" y="275.20" width="1.87" height="71.90" fill="#e2f3fc"/><rect x="341.40" y="202.90" width="1.87" height="72.30" fill="#fff2c4"/><rect x="345.47" y="275.20" width="1.87" height="71.90" fill="#e2f3fc"/><rect x="345.47" y="202.20" width="1.87" height="73.00" fill="#fff2c4"/><rect x="349.54" y="275.20" width="1.87" height="71.90" fill="#e2f3fc"/><rect x="349.54" y="202.20" width="1.87" height="73.00" fill="#fff2c4"/><rect x="353.61" y="275.20" width="1.87" height="71.90" fill="#e2f3fc"/><rect x="353.61" y="202.20" width="1.87" height="73.00" fill="#fff2c4"/><rect x="357.68" y="275.20" width="1.87" height="71.90" fill="#e2f3fc"/><rect x="357.68" y="201.00" width="1.87" height="74.20" fill="#fff2c4"/><rect x="361.75" y="274.40" width="1.87" height="72.70" fill="#e2f3fc"/><rect x="361.75" y="201.70" width="1.87" height="72.70" fill="#fff2c4"/><rect x="365.82" y="274.40" width="1.87" height="72.70" fill="#e2f3fc"/><rect x="365.82" y="201.70" width="1.87" height="72.70" fill="#fff2c4"/><rect x="369.89" y="274.40" width="1.87" height="72.70" fill="#e2f3fc"/><rect x="369.89" y="201.00" width="1.87" height="73.40" fill="#fff2c4"/><rect x="373.96" y="274.40" width="1.87" height="72.70" fill="#e2f3fc"/><rect x="373.96" y="201.00" width="1.87" height="73.40" fill="#fff2c4"/><rect x="257.80" y="275.90" width="2.2" height="71.20" fill="#2d73ea"/><rect x="257.80" y="207.60" width="2.2" height="68.30" fill="#f6c63a"/><rect x="261.87" y="275.50" width="2.2" height="71.60" fill="#2d73ea"/><rect x="261.87" y="206.50" width="2.2" height="69.00" fill="#f6c63a"/><rect x="265.94" y="275.20" width="2.2" height="71.90" fill="#2d73ea"/><rect x="265.94" y="206.10" width="2.2" height="69.10" fill="#f6c63a"/><rect x="270.01" y="274.40" width="2.2" height="72.70" fill="#2d73ea"/><rect x="270.01" y="204.80" width="2.2" height="69.60" fill="#f6c63a"/><rect x="274.08" y="275.50" width="2.2" height="71.60" fill="#2d73ea"/><rect x="274.08" y="204.80" width="2.2" height="70.70" fill="#f6c63a"/><rect x="278.15" y="275.50" width="2.2" height="71.60" fill="#2d73ea"/><rect x="278.15" y="205.30" width="2.2" height="70.20" fill="#f6c63a"/><rect x="282.22" y="275.20" width="2.2" height="71.90" fill="#2d73ea"/><rect x="282.22" y="204.80" width="2.2" height="70.40" fill="#f6c63a"/><rect x="286.29" y="275.20" width="2.2" height="71.90" fill="#2d73ea"/><rect x="286.29" y="204.20" width="2.2" height="71.00" fill="#f6c63a"/><rect x="290.36" y="275.20" width="2.2" height="71.90" fill="#2d73ea"/><rect x="290.36" y="204.80" width="2.2" height="70.40" fill="#f6c63a"/><rect x="294.43" y="275.20" width="2.2" height="71.90" fill="#2d73ea"/><rect x="294.43" y="204.20" width="2.2" height="71.00" fill="#f6c63a"/><rect x="298.50" y="275.20" width="2.2" height="71.90" fill="#2d73ea"/><rect x="298.50" y="204.20" width="2.2" height="71.00" fill="#f6c63a"/><rect x="302.57" y="275.20" width="2.2" height="71.90" fill="#2d73ea"/><rect x="302.57" y="203.40" width="2.2" height="71.80" fill="#f6c63a"/><rect x="306.64" y="275.20" width="2.2" height="71.90" fill="#2d73ea"/><rect x="306.64" y="203.40" width="2.2" height="71.80" fill="#f6c63a"/><rect x="310.71" y="275.20" width="2.2" height="71.90" fill="#2d73ea"/><rect x="310.71" y="203.40" width="2.2" height="71.80" fill="#f6c63a"/><rect x="314.78" y="275.20" width="2.2" height="71.90" fill="#2d73ea"/><rect x="314.78" y="203.70" width="2.2" height="71.50" fill="#f6c63a"/><rect x="318.85" y="274.40" width="2.2" height="72.70" fill="#2d73ea"/><rect x="318.85" y="203.40" width="2.2" height="71.00" fill="#f6c63a"/><rect x="322.92" y="275.20" width="2.2" height="71.90" fill="#2d73ea"/><rect x="322.92" y="202.90" width="2.2" height="72.30" fill="#f6c63a"/><rect x="326.99" y="275.20" width="2.2" height="71.90" fill="#2d73ea"/><rect x="326.99" y="202.90" width="2.2" height="72.30" fill="#f6c63a"/><rect x="331.06" y="274.40" width="2.2" height="72.70" fill="#2d73ea"/><rect x="331.06" y="202.20" width="2.2" height="72.20" fill="#f6c63a"/><rect x="335.13" y="275.20" width="2.2" height="71.90" fill="#2d73ea"/><rect x="335.13" y="202.20" width="2.2" height="73.00" fill="#f6c63a"/><rect x="339.20" y="274.40" width="2.2" height="72.70" fill="#2d73ea"/><rect x="339.20" y="202.90" width="2.2" height="71.50" fill="#f6c63a"/><rect x="343.27" y="275.20" width="2.2" height="71.90" fill="#2d73ea"/><rect x="343.27" y="202.20" width="2.2" height="73.00" fill="#f6c63a"/><rect x="347.34" y="275.20" width="2.2" height="71.90" fill="#2d73ea"/><rect x="347.34" y="202.20" width="2.2" height="73.00" fill="#f6c63a"/><rect x="351.41" y="274.40" width="2.2" height="72.70" fill="#2d73ea"/><rect x="351.41" y="202.20" width="2.2" height="72.20" fill="#f6c63a"/><rect x="355.48" y="275.20" width="2.2" height="71.90" fill="#2d73ea"/><rect x="355.48" y="201.00" width="2.2" height="74.20" fill="#f6c63a"/><rect x="359.55" y="274.40" width="2.2" height="72.70" fill="#2d73ea"/><rect x="359.55" y="201.00" width="2.2" height="73.40" fill="#f6c63a"/><rect x="363.62" y="274.40" width="2.2" height="72.70" fill="#2d73ea"/><rect x="363.62" y="201.70" width="2.2" height="72.70" fill="#f6c63a"/><rect x="367.69" y="274.40" width="2.2" height="72.70" fill="#2d73ea"/><rect x="367.69" y="201.00" width="2.2" height="73.40" fill="#f6c63a"/><rect x="371.76" y="274.40" width="2.2" height="72.70" fill="#2d73ea"/><rect x="371.76" y="201.00" width="2.2" height="73.40" fill="#f6c63a"/><rect x="375.83" y="272.00" width="2.2" height="75.10" fill="#2d73ea"/><rect x="375.83" y="197.20" width="2.2" height="74.80" fill="#f6c63a"/></svg>
<svg class="r" style="left:0;top:0" width="800" height="494"><rect x="462.40" y="263.80" width="1.88" height="83.30" fill="#e2f3fc"/><rect x="462.40" y="204.30" width="1.88" height="59.50" fill="#fff2c4"/><rect x="466.48" y="263.00" width="1.88" height="84.10" fill="#e2f3fc"/><rect x="466.48" y="203.00" width="1.88" height="60.00" fill="#fff2c4"/><rect x="470.56" y="263.80" width="1.88" height="83.30" fill="#e2f3fc"/><rect x="470.56" y="203.80" width="1.88" height="60.00" fill="#fff2c4"/><rect x="474.64" y="263.80" width="1.88" height="83.30" fill="#e2f3fc"/><rect x="474.64" y="203.80" width="1.88" height="60.00" fill="#fff2c4"/><rect x="478.72" y="263.00" width="1.88" height="84.10" fill="#e2f3fc"/><rect x="478.72" y="202.20" width="1.88" height="60.80" fill="#fff2c4"/><rect x="482.80" y="263.00" width="1.88" height="84.10" fill="#e2f3fc"/><rect x="482.80" y="202.20" width="1.88" height="60.80" fill="#fff2c4"/><rect x="486.88" y="263.00" width="1.88" height="84.10" fill="#e2f3fc"/><rect x="486.88" y="201.70" width="1.88" height="61.30" fill="#fff2c4"/><rect x="490.96" y="263.00" width="1.88" height="84.10" fill="#e2f3fc"/><rect x="490.96" y="201.70" width="1.88" height="61.30" fill="#fff2c4"/><rect x="495.04" y="264.60" width="1.88" height="82.50" fill="#e2f3fc"/><rect x="495.04" y="201.70" width="1.88" height="62.90" fill="#fff2c4"/><rect x="499.12" y="264.60" width="1.88" height="82.50" fill="#e2f3fc"/><rect x="499.12" y="201.70" width="1.88" height="62.90" fill="#fff2c4"/><rect x="503.20" y="263.00" width="1.88" height="84.10" fill="#e2f3fc"/><rect x="503.20" y="201.70" width="1.88" height="61.30" fill="#fff2c4"/><rect x="507.28" y="263.00" width="1.88" height="84.10" fill="#e2f3fc"/><rect x="507.28" y="201.70" width="1.88" height="61.30" fill="#fff2c4"/><rect x="511.36" y="262.70" width="1.88" height="84.40" fill="#e2f3fc"/><rect x="511.36" y="201.00" width="1.88" height="61.70" fill="#fff2c4"/><rect x="515.44" y="262.20" width="1.88" height="84.90" fill="#e2f3fc"/><rect x="515.44" y="200.60" width="1.88" height="61.60" fill="#fff2c4"/><rect x="519.52" y="262.20" width="1.88" height="84.90" fill="#e2f3fc"/><rect x="519.52" y="200.60" width="1.88" height="61.60" fill="#fff2c4"/><rect x="523.60" y="262.20" width="1.88" height="84.90" fill="#e2f3fc"/><rect x="523.60" y="200.60" width="1.88" height="61.60" fill="#fff2c4"/><rect x="527.68" y="262.20" width="1.88" height="84.90" fill="#e2f3fc"/><rect x="527.68" y="200.60" width="1.88" height="61.60" fill="#fff2c4"/><rect x="531.76" y="262.70" width="1.88" height="84.40" fill="#e2f3fc"/><rect x="531.76" y="200.60" width="1.88" height="62.10" fill="#fff2c4"/><rect x="535.84" y="262.70" width="1.88" height="84.40" fill="#e2f3fc"/><rect x="535.84" y="200.60" width="1.88" height="62.10" fill="#fff2c4"/><rect x="539.92" y="262.70" width="1.88" height="84.40" fill="#e2f3fc"/><rect x="539.92" y="200.60" width="1.88" height="62.10" fill="#fff2c4"/><rect x="544.00" y="262.70" width="1.88" height="84.40" fill="#e2f3fc"/><rect x="544.00" y="200.60" width="1.88" height="62.10" fill="#fff2c4"/><rect x="548.08" y="262.70" width="1.88" height="84.40" fill="#e2f3fc"/><rect x="548.08" y="200.10" width="1.88" height="62.60" fill="#fff2c4"/><rect x="552.16" y="262.20" width="1.88" height="84.90" fill="#e2f3fc"/><rect x="552.16" y="200.10" width="1.88" height="62.10" fill="#fff2c4"/><rect x="556.24" y="262.20" width="1.88" height="84.90" fill="#e2f3fc"/><rect x="556.24" y="200.10" width="1.88" height="62.10" fill="#fff2c4"/><rect x="560.32" y="262.20" width="1.88" height="84.90" fill="#e2f3fc"/><rect x="560.32" y="200.10" width="1.88" height="62.10" fill="#fff2c4"/><rect x="564.40" y="262.70" width="1.88" height="84.40" fill="#e2f3fc"/><rect x="564.40" y="199.40" width="1.88" height="63.30" fill="#fff2c4"/><rect x="568.48" y="262.70" width="1.88" height="84.40" fill="#e2f3fc"/><rect x="568.48" y="199.40" width="1.88" height="63.30" fill="#fff2c4"/><rect x="572.56" y="261.40" width="1.88" height="85.70" fill="#e2f3fc"/><rect x="572.56" y="198.10" width="1.88" height="63.30" fill="#fff2c4"/><rect x="576.64" y="261.40" width="1.88" height="85.70" fill="#e2f3fc"/><rect x="576.64" y="196.80" width="1.88" height="64.60" fill="#fff2c4"/><rect x="460.20" y="263.80" width="2.2" height="83.30" fill="#2d73ea"/><rect x="460.20" y="204.30" width="2.2" height="59.50" fill="#f6c63a"/><rect x="464.28" y="263.00" width="2.2" height="84.10" fill="#2d73ea"/><rect x="464.28" y="203.00" width="2.2" height="60.00" fill="#f6c63a"/><rect x="468.36" y="263.00" width="2.2" height="84.10" fill="#2d73ea"/><rect x="468.36" y="203.00" width="2.2" height="60.00" fill="#f6c63a"/><rect x="472.44" y="263.80" width="2.2" height="83.30" fill="#2d73ea"/><rect x="472.44" y="203.80" width="2.2" height="60.00" fill="#f6c63a"/><rect x="476.52" y="263.00" width="2.2" height="84.10" fill="#2d73ea"/><rect x="476.52" y="201.70" width="2.2" height="61.30" fill="#f6c63a"/><rect x="480.60" y="262.70" width="2.2" height="84.40" fill="#2d73ea"/><rect x="480.60" y="202.20" width="2.2" height="60.50" fill="#f6c63a"/><rect x="484.68" y="263.00" width="2.2" height="84.10" fill="#2d73ea"/><rect x="484.68" y="201.70" width="2.2" height="61.30" fill="#f6c63a"/><rect x="488.76" y="263.00" width="2.2" height="84.10" fill="#2d73ea"/><rect x="488.76" y="201.70" width="2.2" height="61.30" fill="#f6c63a"/><rect x="492.84" y="263.00" width="2.2" height="84.10" fill="#2d73ea"/><rect x="492.84" y="201.70" width="2.2" height="61.30" fill="#f6c63a"/><rect x="496.92" y="264.60" width="2.2" height="82.50" fill="#2d73ea"/><rect x="496.92" y="201.70" width="2.2" height="62.90" fill="#f6c63a"/><rect x="501.00" y="263.00" width="2.2" height="84.10" fill="#2d73ea"/><rect x="501.00" y="201.70" width="2.2" height="61.30" fill="#f6c63a"/><rect x="505.08" y="263.00" width="2.2" height="84.10" fill="#2d73ea"/><rect x="505.08" y="201.70" width="2.2" height="61.30" fill="#f6c63a"/><rect x="509.16" y="262.70" width="2.2" height="84.40" fill="#2d73ea"/><rect x="509.16" y="201.00" width="2.2" height="61.70" fill="#f6c63a"/><rect x="513.24" y="262.20" width="2.2" height="84.90" fill="#2d73ea"/><rect x="513.24" y="200.60" width="2.2" height="61.60" fill="#f6c63a"/><rect x="517.32" y="262.20" width="2.2" height="84.90" fill="#2d73ea"/><rect x="517.32" y="200.60" width="2.2" height="61.60" fill="#f6c63a"/><rect x="521.40" y="262.20" width="2.2" height="84.90" fill="#2d73ea"/><rect x="521.40" y="200.60" width="2.2" height="61.60" fill="#f6c63a"/><rect x="525.48" y="261.40" width="2.2" height="85.70" fill="#2d73ea"/><rect x="525.48" y="200.60" width="2.2" height="60.80" fill="#f6c63a"/><rect x="529.56" y="262.20" width="2.2" height="84.90" fill="#2d73ea"/><rect x="529.56" y="200.60" width="2.2" height="61.60" fill="#f6c63a"/><rect x="533.64" y="262.70" width="2.2" height="84.40" fill="#2d73ea"/><rect x="533.64" y="200.60" width="2.2" height="62.10" fill="#f6c63a"/><rect x="537.72" y="262.70" width="2.2" height="84.40" fill="#2d73ea"/><rect x="537.72" y="200.60" width="2.2" height="62.10" fill="#f6c63a"/><rect x="541.80" y="262.70" width="2.2" height="84.40" fill="#2d73ea"/><rect x="541.80" y="200.60" width="2.2" height="62.10" fill="#f6c63a"/><rect x="545.88" y="262.70" width="2.2" height="84.40" fill="#2d73ea"/><rect x="545.88" y="200.10" width="2.2" height="62.60" fill="#f6c63a"/><rect x="549.96" y="262.20" width="2.2" height="84.90" fill="#2d73ea"/><rect x="549.96" y="200.10" width="2.2" height="62.10" fill="#f6c63a"/><rect x="554.04" y="262.20" width="2.2" height="84.90" fill="#2d73ea"/><rect x="554.04" y="200.10" width="2.2" height="62.10" fill="#f6c63a"/><rect x="558.12" y="262.20" width="2.2" height="84.90" fill="#2d73ea"/><rect x="558.12" y="200.10" width="2.2" height="62.10" fill="#f6c63a"/><rect x="562.20" y="262.20" width="2.2" height="84.90" fill="#2d73ea"/><rect x="562.20" y="199.40" width="2.2" height="62.80" fill="#f6c63a"/><rect x="566.28" y="262.70" width="2.2" height="84.40" fill="#2d73ea"/><rect x="566.28" y="199.40" width="2.2" height="63.30" fill="#f6c63a"/><rect x="570.36" y="261.40" width="2.2" height="85.70" fill="#2d73ea"/><rect x="570.36" y="198.10" width="2.2" height="63.30" fill="#f6c63a"/><rect x="574.44" y="261.40" width="2.2" height="85.70" fill="#2d73ea"/><rect x="574.44" y="196.80" width="2.2" height="64.60" fill="#f6c63a"/><rect x="578.52" y="259.40" width="2.2" height="87.70" fill="#2d73ea"/><rect x="578.52" y="196.80" width="2.2" height="62.60" fill="#f6c63a"/></svg>
<svg class="r" style="left:0;top:0" width="800" height="494"><rect x="663.60" y="278.60" width="1.66" height="68.50" fill="#e2f3fc"/><rect x="663.60" y="240.30" width="1.66" height="38.30" fill="#fff2c4"/><rect x="667.36" y="268.10" width="1.66" height="79.00" fill="#e2f3fc"/><rect x="667.36" y="212.00" width="1.66" height="56.10" fill="#fff2c4"/><rect x="671.12" y="268.10" width="1.66" height="79.00" fill="#e2f3fc"/><rect x="671.12" y="201.40" width="1.66" height="66.70" fill="#fff2c4"/><rect x="674.88" y="268.10" width="1.66" height="79.00" fill="#e2f3fc"/><rect x="674.88" y="196.20" width="1.66" height="71.90" fill="#fff2c4"/><rect x="678.64" y="268.10" width="1.66" height="79.00" fill="#e2f3fc"/><rect x="678.64" y="194.20" width="1.66" height="73.90" fill="#fff2c4"/><rect x="682.40" y="268.10" width="1.66" height="79.00" fill="#e2f3fc"/><rect x="682.40" y="191.60" width="1.66" height="76.50" fill="#fff2c4"/><rect x="686.16" y="268.10" width="1.66" height="79.00" fill="#e2f3fc"/><rect x="686.16" y="190.90" width="1.66" height="77.20" fill="#fff2c4"/><rect x="689.92" y="268.10" width="1.66" height="79.00" fill="#e2f3fc"/><rect x="689.92" y="190.30" width="1.66" height="77.80" fill="#fff2c4"/><rect x="693.68" y="268.10" width="1.66" height="79.00" fill="#e2f3fc"/><rect x="693.68" y="189.80" width="1.66" height="78.30" fill="#fff2c4"/><rect x="697.44" y="268.10" width="1.66" height="79.00" fill="#e2f3fc"/><rect x="697.44" y="189.50" width="1.66" height="78.60" fill="#fff2c4"/><rect x="701.20" y="268.10" width="1.66" height="79.00" fill="#e2f3fc"/><rect x="701.20" y="189.40" width="1.66" height="78.70" fill="#fff2c4"/><rect x="704.96" y="268.10" width="1.66" height="79.00" fill="#e2f3fc"/><rect x="704.96" y="189.40" width="1.66" height="78.70" fill="#fff2c4"/><rect x="708.72" y="268.10" width="1.66" height="79.00" fill="#e2f3fc"/><rect x="708.72" y="189.40" width="1.66" height="78.70" fill="#fff2c4"/><rect x="712.48" y="268.10" width="1.66" height="79.00" fill="#e2f3fc"/><rect x="712.48" y="189.40" width="1.66" height="78.70" fill="#fff2c4"/><rect x="716.24" y="268.10" width="1.66" height="79.00" fill="#e2f3fc"/><rect x="716.24" y="189.40" width="1.66" height="78.70" fill="#fff2c4"/><rect x="720.00" y="268.10" width="1.66" height="79.00" fill="#e2f3fc"/><rect x="720.00" y="189.40" width="1.66" height="78.70" fill="#fff2c4"/><rect x="723.76" y="268.10" width="1.66" height="79.00" fill="#e2f3fc"/><rect x="723.76" y="189.40" width="1.66" height="78.70" fill="#fff2c4"/><rect x="727.52" y="268.10" width="1.66" height="79.00" fill="#e2f3fc"/><rect x="727.52" y="189.40" width="1.66" height="78.70" fill="#fff2c4"/><rect x="731.28" y="268.10" width="1.66" height="79.00" fill="#e2f3fc"/><rect x="731.28" y="189.40" width="1.66" height="78.70" fill="#fff2c4"/><rect x="735.04" y="268.10" width="1.66" height="79.00" fill="#e2f3fc"/><rect x="735.04" y="189.40" width="1.66" height="78.70" fill="#fff2c4"/><rect x="738.80" y="268.10" width="1.66" height="79.00" fill="#e2f3fc"/><rect x="738.80" y="189.40" width="1.66" height="78.70" fill="#fff2c4"/><rect x="742.56" y="268.10" width="1.66" height="79.00" fill="#e2f3fc"/><rect x="742.56" y="189.40" width="1.66" height="78.70" fill="#fff2c4"/><rect x="746.32" y="268.10" width="1.66" height="79.00" fill="#e2f3fc"/><rect x="746.32" y="189.40" width="1.66" height="78.70" fill="#fff2c4"/><rect x="750.08" y="268.10" width="1.66" height="79.00" fill="#e2f3fc"/><rect x="750.08" y="189.40" width="1.66" height="78.70" fill="#fff2c4"/><rect x="753.84" y="268.10" width="1.66" height="79.00" fill="#e2f3fc"/><rect x="753.84" y="189.40" width="1.66" height="78.70" fill="#fff2c4"/><rect x="757.60" y="268.10" width="1.66" height="79.00" fill="#e2f3fc"/><rect x="757.60" y="189.40" width="1.66" height="78.70" fill="#fff2c4"/><rect x="761.36" y="268.10" width="1.66" height="79.00" fill="#e2f3fc"/><rect x="761.36" y="189.40" width="1.66" height="78.70" fill="#fff2c4"/><rect x="765.12" y="268.10" width="1.66" height="79.00" fill="#e2f3fc"/><rect x="765.12" y="189.40" width="1.66" height="78.70" fill="#fff2c4"/><rect x="768.88" y="268.10" width="1.66" height="79.00" fill="#e2f3fc"/><rect x="768.88" y="189.40" width="1.66" height="78.70" fill="#fff2c4"/><rect x="772.64" y="268.10" width="1.66" height="79.00" fill="#e2f3fc"/><rect x="772.64" y="189.40" width="1.66" height="78.70" fill="#fff2c4"/><rect x="661.50" y="278.60" width="2.1" height="68.50" fill="#2d73ea"/><rect x="661.50" y="240.30" width="2.1" height="38.30" fill="#f6c63a"/><rect x="665.26" y="268.10" width="2.1" height="79.00" fill="#2d73ea"/><rect x="665.26" y="212.00" width="2.1" height="56.10" fill="#f6c63a"/><rect x="669.02" y="268.10" width="2.1" height="79.00" fill="#2d73ea"/><rect x="669.02" y="201.40" width="2.1" height="66.70" fill="#f6c63a"/><rect x="672.78" y="268.10" width="2.1" height="79.00" fill="#2d73ea"/><rect x="672.78" y="196.20" width="2.1" height="71.90" fill="#f6c63a"/><rect x="676.54" y="268.10" width="2.1" height="79.00" fill="#2d73ea"/><rect x="676.54" y="194.20" width="2.1" height="73.90" fill="#f6c63a"/><rect x="680.30" y="268.10" width="2.1" height="79.00" fill="#2d73ea"/><rect x="680.30" y="191.60" width="2.1" height="76.50" fill="#f6c63a"/><rect x="684.06" y="268.10" width="2.1" height="79.00" fill="#2d73ea"/><rect x="684.06" y="190.90" width="2.1" height="77.20" fill="#f6c63a"/><rect x="687.82" y="268.10" width="2.1" height="79.00" fill="#2d73ea"/><rect x="687.82" y="190.30" width="2.1" height="77.80" fill="#f6c63a"/><rect x="691.58" y="268.10" width="2.1" height="79.00" fill="#2d73ea"/><rect x="691.58" y="189.80" width="2.1" height="78.30" fill="#f6c63a"/><rect x="695.34" y="268.10" width="2.1" height="79.00" fill="#2d73ea"/><rect x="695.34" y="189.50" width="2.1" height="78.60" fill="#f6c63a"/><rect x="699.10" y="268.10" width="2.1" height="79.00" fill="#2d73ea"/><rect x="699.10" y="189.40" width="2.1" height="78.70" fill="#f6c63a"/><rect x="702.86" y="268.10" width="2.1" height="79.00" fill="#2d73ea"/><rect x="702.86" y="189.40" width="2.1" height="78.70" fill="#f6c63a"/><rect x="706.62" y="268.10" width="2.1" height="79.00" fill="#2d73ea"/><rect x="706.62" y="189.40" width="2.1" height="78.70" fill="#f6c63a"/><rect x="710.38" y="268.10" width="2.1" height="79.00" fill="#2d73ea"/><rect x="710.38" y="189.40" width="2.1" height="78.70" fill="#f6c63a"/><rect x="714.14" y="268.10" width="2.1" height="79.00" fill="#2d73ea"/><rect x="714.14" y="189.40" width="2.1" height="78.70" fill="#f6c63a"/><rect x="717.90" y="268.10" width="2.1" height="79.00" fill="#2d73ea"/><rect x="717.90" y="189.40" width="2.1" height="78.70" fill="#f6c63a"/><rect x="721.66" y="268.10" width="2.1" height="79.00" fill="#2d73ea"/><rect x="721.66" y="189.40" width="2.1" height="78.70" fill="#f6c63a"/><rect x="725.42" y="268.10" width="2.1" height="79.00" fill="#2d73ea"/><rect x="725.42" y="189.40" width="2.1" height="78.70" fill="#f6c63a"/><rect x="729.18" y="268.10" width="2.1" height="79.00" fill="#2d73ea"/><rect x="729.18" y="189.40" width="2.1" height="78.70" fill="#f6c63a"/><rect x="732.94" y="268.10" width="2.1" height="79.00" fill="#2d73ea"/><rect x="732.94" y="189.40" width="2.1" height="78.70" fill="#f6c63a"/><rect x="736.70" y="268.10" width="2.1" height="79.00" fill="#2d73ea"/><rect x="736.70" y="189.40" width="2.1" height="78.70" fill="#f6c63a"/><rect x="740.46" y="268.10" width="2.1" height="79.00" fill="#2d73ea"/><rect x="740.46" y="189.40" width="2.1" height="78.70" fill="#f6c63a"/><rect x="744.22" y="268.10" width="2.1" height="79.00" fill="#2d73ea"/><rect x="744.22" y="189.40" width="2.1" height="78.70" fill="#f6c63a"/><rect x="747.98" y="268.10" width="2.1" height="79.00" fill="#2d73ea"/><rect x="747.98" y="189.40" width="2.1" height="78.70" fill="#f6c63a"/><rect x="751.74" y="268.10" width="2.1" height="79.00" fill="#2d73ea"/><rect x="751.74" y="189.40" width="2.1" height="78.70" fill="#f6c63a"/><rect x="755.50" y="268.10" width="2.1" height="79.00" fill="#2d73ea"/><rect x="755.50" y="189.40" width="2.1" height="78.70" fill="#f6c63a"/><rect x="759.26" y="268.10" width="2.1" height="79.00" fill="#2d73ea"/><rect x="759.26" y="189.40" width="2.1" height="78.70" fill="#f6c63a"/><rect x="763.02" y="268.10" width="2.1" height="79.00" fill="#2d73ea"/><rect x="763.02" y="189.40" width="2.1" height="78.70" fill="#f6c63a"/><rect x="766.78" y="268.10" width="2.1" height="79.00" fill="#2d73ea"/><rect x="766.78" y="189.40" width="2.1" height="78.70" fill="#f6c63a"/><rect x="770.54" y="268.10" width="2.1" height="79.00" fill="#2d73ea"/><rect x="770.54" y="189.40" width="2.1" height="78.70" fill="#f6c63a"/><rect x="774.30" y="268.10" width="2.1" height="79.00" fill="#2d73ea"/><rect x="774.30" y="189.40" width="2.1" height="78.70" fill="#f6c63a"/></svg>
<div class="r" style="left:6.5px;top:381.3px;width:189.3px;height:138.7px;background:#fff;border:1px solid #ededed;box-sizing:border-box;border-radius:5px"></div>
<div class="r" style="left:204.7px;top:381.3px;width:192.7px;height:138.7px;background:#fff;border:1px solid #ededed;box-sizing:border-box;border-radius:5px"></div>
<div class="r" style="left:407.1px;top:381.3px;width:192.9px;height:138.7px;background:#fff;border:1px solid #ededed;box-sizing:border-box;border-radius:5px"></div>
<div class="r" style="left:609.3px;top:381.3px;width:196.7px;height:138.7px;background:#fff;border:1px solid #ededed;box-sizing:border-box;border-radius:5px"></div>
<div class="t" style="left:20px;top:391.3px;font-size:10px;line-height:12px;color:#262626;font-weight:bold;-webkit-text-stroke:0;">Hub Recon NEW Keys b...</div>
<svg class="r" style="left:0;top:0" width="800" height="494"><g fill="none" stroke="#a0a0a0" stroke-width="0.9"><line x1="149.8" y1="394.0" x2="155.8" y2="394.0"/><circle cx="156.60000000000002" cy="394.0" r="1.5" fill="#fff"/><line x1="151.8" y1="398.5" x2="158.3" y2="398.5"/><circle cx="152.0" cy="398.5" r="1.5" fill="#fff"/></g><g fill="#777"><rect x="168.60000000000002" y="395.40000000000003" width="1.8" height="1.8"/><rect x="171.9" y="395.40000000000003" width="1.8" height="1.8"/><rect x="175.20000000000002" y="395.40000000000003" width="1.8" height="1.8"/></g></svg>
<div class="t" style="left:218.2px;top:391.3px;font-size:10px;line-height:12px;color:#262626;font-weight:bold;-webkit-text-stroke:0;">Hub Recon STAGED Key...</div>
<svg class="r" style="left:0;top:0" width="800" height="494"><g fill="none" stroke="#a0a0a0" stroke-width="0.9"><line x1="351.4" y1="394.0" x2="357.4" y2="394.0"/><circle cx="358.2" cy="394.0" r="1.5" fill="#fff"/><line x1="353.4" y1="398.5" x2="359.9" y2="398.5"/><circle cx="353.59999999999997" cy="398.5" r="1.5" fill="#fff"/></g><g fill="#777"><rect x="370.2" y="395.40000000000003" width="1.8" height="1.8"/><rect x="373.5" y="395.40000000000003" width="1.8" height="1.8"/><rect x="376.79999999999995" y="395.40000000000003" width="1.8" height="1.8"/></g></svg>
<div class="t" style="left:420.6px;top:391.3px;font-size:10px;line-height:12px;color:#262626;font-weight:bold;-webkit-text-stroke:0;">Hub Recon STAGED DIS...</div>
<svg class="r" style="left:0;top:0" width="800" height="494"><g fill="none" stroke="#a0a0a0" stroke-width="0.9"><line x1="554.0" y1="394.0" x2="560.0" y2="394.0"/><circle cx="560.8" cy="394.0" r="1.5" fill="#fff"/><line x1="556.0" y1="398.5" x2="562.5" y2="398.5"/><circle cx="556.2" cy="398.5" r="1.5" fill="#fff"/></g><g fill="#777"><rect x="572.8" y="395.40000000000003" width="1.8" height="1.8"/><rect x="576.1" y="395.40000000000003" width="1.8" height="1.8"/><rect x="579.4" y="395.40000000000003" width="1.8" height="1.8"/></g></svg>
<div class="t" style="left:622.8px;top:391.3px;font-size:10px;line-height:12px;color:#262626;font-weight:bold;-webkit-text-stroke:0;">Hub Recon count after ...</div>
<svg class="r" style="left:0;top:0" width="800" height="494"><g fill="none" stroke="#a0a0a0" stroke-width="0.9"><line x1="750.0" y1="394.0" x2="756.0" y2="394.0"/><circle cx="756.8" cy="394.0" r="1.5" fill="#fff"/><line x1="752.0" y1="398.5" x2="758.5" y2="398.5"/><circle cx="752.2" cy="398.5" r="1.5" fill="#fff"/></g><g fill="#777"><rect x="768.8" y="395.40000000000003" width="1.8" height="1.8"/><rect x="772.1" y="395.40000000000003" width="1.8" height="1.8"/><rect x="775.4" y="395.40000000000003" width="1.8" height="1.8"/></g></svg>
<svg class="r" style="left:0;top:0" width="800" height="494"><circle cx="20.75" cy="419.4" r="1.9" fill="#2d73ea"/><circle cx="20.75" cy="429.7" r="1.9" fill="#f6c63a"/><g stroke="#858585" stroke-width="0.8"><line x1="19.0" y1="440" x2="22.6" y2="440"/><line x1="20.8" y1="438.2" x2="20.8" y2="441.8"/></g></svg>
<div class="t" style="left:26.75px;top:414.77px;font-size:8.05px;line-height:9.66px;color:#6e6e6e;font-weight:normal;">hub_account-staged.bv_account_car...</div>
<div class="t" style="left:26.75px;top:425.07px;font-size:8.05px;line-height:9.66px;color:#6e6e6e;font-weight:normal;">hub_account-staged.card_balancecat...</div>
<div class="t" style="left:26.75px;top:435.14px;font-size:8.1px;line-height:9.72px;color:#6e6e6e;font-weight:normal;">4 more</div>
<svg class="r" style="left:0;top:0" width="800" height="494"><circle cx="218.95" cy="419.4" r="1.9" fill="#2d73ea"/><circle cx="218.95" cy="429.7" r="1.9" fill="#f6c63a"/><g stroke="#858585" stroke-width="0.8"><line x1="217.2" y1="440" x2="220.79999999999998" y2="440"/><line x1="219.0" y1="438.2" x2="219.0" y2="441.8"/></g></svg>
<div class="t" style="left:224.95px;top:414.77px;font-size:8.05px;line-height:9.66px;color:#6e6e6e;font-weight:normal;">hub_account-staged.bv_account_card...</div>
<div class="t" style="left:224.95px;top:425.07px;font-size:8.05px;line-height:9.66px;color:#6e6e6e;font-weight:normal;">hub_account-staged.card_balancecate...</div>
<div class="t" style="left:224.95px;top:435.14px;font-size:8.1px;line-height:9.72px;color:#6e6e6e;font-weight:normal;">4 more</div>
<svg class="r" style="left:0;top:0" width="800" height="494"><circle cx="421.35" cy="419.4" r="1.9" fill="#2d73ea"/><circle cx="421.35" cy="429.7" r="1.9" fill="#f6c63a"/><g stroke="#858585" stroke-width="0.8"><line x1="419.6" y1="440" x2="423.20000000000005" y2="440"/><line x1="421.40000000000003" y1="438.2" x2="421.40000000000003" y2="441.8"/></g></svg>
<div class="t" style="left:427.35px;top:414.77px;font-size:8.05px;line-height:9.66px;color:#6e6e6e;font-weight:normal;">hub_account-staged.bv_account_card...</div>
<div class="t" style="left:427.35px;top:425.07px;font-size:8.05px;line-height:9.66px;color:#6e6e6e;font-weight:normal;">hub_account-staged.card_balancecate...</div>
<div class="t" style="left:427.35px;top:435.14px;font-size:8.1px;line-height:9.72px;color:#6e6e6e;font-weight:normal;">4 more</div>
<svg class="r" style="left:0;top:0" width="800" height="494"><circle cx="623.55" cy="419.4" r="1.9" fill="#2d73ea"/><circle cx="623.55" cy="429.7" r="1.9" fill="#f6c63a"/><g stroke="#858585" stroke-width="0.8"><line x1="621.8" y1="440" x2="625.4" y2="440"/><line x1="623.5999999999999" y1="438.2" x2="623.5999999999999" y2="441.8"/></g></svg>
<div class="t" style="left:629.55px;top:414.77px;font-size:8.05px;line-height:9.66px;color:#6e6e6e;font-weight:normal;">hub_account-staged.bv_account_car...</div>
<div class="t" style="left:629.55px;top:425.07px;font-size:8.05px;line-height:9.66px;color:#6e6e6e;font-weight:normal;">hub_account-staged.card_balanceca...</div>
<div class="t" style="left:629.55px;top:435.14px;font-size:8.1px;line-height:9.72px;color:#6e6e6e;font-weight:normal;">4 more</div>
<svg class="r" style="left:0;top:0" width="800" height="494"><rect x="20.0" y="449.8" width="163.3" height="1" fill="#ececec"/><rect x="20.0" y="469.5" width="163.3" height="1" fill="#ececec"/><rect x="20.0" y="489.2" width="163.3" height="1" fill="#ececec"/></svg>
<div class="t" style="left:1.6px;width:40px;text-align:right;top:455.2px;font-size:9px;line-height:10.8px;color:#8a8a8a">1,400</div>
<div class="t" style="left:1.6px;width:40px;text-align:right;top:474.9px;font-size:9px;line-height:10.8px;color:#8a8a8a">1,200</div>
<div class="t" style="left:1.6px;width:40px;text-align:right;top:494.6px;font-size:9px;line-height:10.8px;color:#8a8a8a"></div>
<svg class="r" style="left:0;top:0" width="800" height="494"><rect x="218.2" y="449.8" width="166.7" height="1" fill="#ececec"/><rect x="218.2" y="469.5" width="166.7" height="1" fill="#ececec"/><rect x="218.2" y="489.2" width="166.7" height="1" fill="#ececec"/></svg>
<div class="t" style="left:200.2px;width:40px;text-align:right;top:455.2px;font-size:9px;line-height:10.8px;color:#8a8a8a">3,500</div>
<div class="t" style="left:200.2px;width:40px;text-align:right;top:474.9px;font-size:9px;line-height:10.8px;color:#8a8a8a">3,000</div>
<div class="t" style="left:200.2px;width:40px;text-align:right;top:494.6px;font-size:9px;line-height:10.8px;color:#8a8a8a"></div>
<svg class="r" style="left:0;top:0" width="800" height="494"><rect x="420.6" y="449.8" width="166.89999999999998" height="1" fill="#ececec"/><rect x="420.6" y="469.5" width="166.89999999999998" height="1" fill="#ececec"/><rect x="420.6" y="489.2" width="166.89999999999998" height="1" fill="#ececec"/></svg>
<div class="t" style="left:401.8px;width:40px;text-align:right;top:455.2px;font-size:9px;line-height:10.8px;color:#8a8a8a">3,500</div>
<div class="t" style="left:401.8px;width:40px;text-align:right;top:474.9px;font-size:9px;line-height:10.8px;color:#8a8a8a">3,000</div>
<div class="t" style="left:401.8px;width:40px;text-align:right;top:494.6px;font-size:9px;line-height:10.8px;color:#8a8a8a"></div>
<svg class="r" style="left:0;top:0" width="800" height="494"><rect x="622.8" y="449.8" width="160.70000000000005" height="1" fill="#ececec"/><rect x="622.8" y="476.9" width="160.70000000000005" height="1" fill="#ececec"/></svg>
<div class="t" style="left:603px;width:40px;text-align:right;top:455.2px;font-size:9px;line-height:10.8px;color:#8a8a8a">5,000</div>
<div class="t" style="left:603px;width:40px;text-align:right;top:482.3px;font-size:9px;line-height:10.8px;color:#8a8a8a">4,000</div>
<svg class="r" style="left:0;top:0" width="800" height="494"><rect x="172.80" y="478.80" width="2.4" height="21.20" fill="#52c8d4"/><rect x="172.80" y="455.30" width="2.4" height="23.50" fill="#7a32c0"/></svg>
<svg class="r" style="left:0;top:0" width="800" height="494"><rect x="267.80" y="491.00" width="1.65" height="9.00" fill="#fbe3ea"/><rect x="267.80" y="466.70" width="1.65" height="24.30" fill="#fff2c4"/><rect x="271.65" y="489.50" width="1.65" height="10.50" fill="#fbe3ea"/><rect x="271.65" y="465.20" width="1.65" height="24.30" fill="#fff2c4"/><rect x="275.50" y="489.80" width="1.65" height="10.20" fill="#fbe3ea"/><rect x="275.50" y="465.20" width="1.65" height="24.60" fill="#fff2c4"/><rect x="279.35" y="489.80" width="1.65" height="10.20" fill="#fbe3ea"/><rect x="279.35" y="465.20" width="1.65" height="24.60" fill="#fff2c4"/><rect x="283.20" y="489.20" width="1.65" height="10.80" fill="#fbe3ea"/><rect x="283.20" y="464.30" width="1.65" height="24.90" fill="#fff2c4"/><rect x="287.05" y="488.30" width="1.65" height="11.70" fill="#fbe3ea"/><rect x="287.05" y="464.30" width="1.65" height="24.00" fill="#fff2c4"/><rect x="290.90" y="488.30" width="1.65" height="11.70" fill="#fbe3ea"/><rect x="290.90" y="463.70" width="1.65" height="24.60" fill="#fff2c4"/><rect x="294.75" y="488.30" width="1.65" height="11.70" fill="#fbe3ea"/><rect x="294.75" y="463.70" width="1.65" height="24.60" fill="#fff2c4"/><rect x="298.60" y="488.00" width="1.65" height="12.00" fill="#fbe3ea"/><rect x="298.60" y="463.70" width="1.65" height="24.30" fill="#fff2c4"/><rect x="302.45" y="489.20" width="1.65" height="10.80" fill="#fbe3ea"/><rect x="302.45" y="463.70" width="1.65" height="25.50" fill="#fff2c4"/><rect x="306.30" y="489.20" width="1.65" height="10.80" fill="#fbe3ea"/><rect x="306.30" y="463.70" width="1.65" height="25.50" fill="#fff2c4"/><rect x="310.15" y="489.20" width="1.65" height="10.80" fill="#fbe3ea"/><rect x="310.15" y="463.70" width="1.65" height="25.50" fill="#fff2c4"/><rect x="314.00" y="489.20" width="1.65" height="10.80" fill="#fbe3ea"/><rect x="314.00" y="463.70" width="1.65" height="25.50" fill="#fff2c4"/><rect x="317.85" y="488.30" width="1.65" height="11.70" fill="#fbe3ea"/><rect x="317.85" y="463.70" width="1.65" height="24.60" fill="#fff2c4"/><rect x="321.70" y="488.30" width="1.65" height="11.70" fill="#fbe3ea"/><rect x="321.70" y="463.70" width="1.65" height="24.60" fill="#fff2c4"/><rect x="325.55" y="488.30" width="1.65" height="11.70" fill="#fbe3ea"/><rect x="325.55" y="463.70" width="1.65" height="24.60" fill="#fff2c4"/><rect x="329.40" y="488.30" width="1.65" height="11.70" fill="#fbe3ea"/><rect x="329.40" y="463.70" width="1.65" height="24.60" fill="#fff2c4"/><rect x="333.25" y="488.30" width="1.65" height="11.70" fill="#fbe3ea"/><rect x="333.25" y="463.70" width="1.65" height="24.60" fill="#fff2c4"/><rect x="337.10" y="488.30" width="1.65" height="11.70" fill="#fbe3ea"/><rect x="337.10" y="463.70" width="1.65" height="24.60" fill="#fff2c4"/><rect x="340.95" y="487.70" width="1.65" height="12.30" fill="#fbe3ea"/><rect x="340.95" y="463.20" width="1.65" height="24.50" fill="#fff2c4"/><rect x="344.80" y="486.80" width="1.65" height="13.20" fill="#fbe3ea"/><rect x="344.80" y="462.20" width="1.65" height="24.60" fill="#fff2c4"/><rect x="348.65" y="486.80" width="1.65" height="13.20" fill="#fbe3ea"/><rect x="348.65" y="462.20" width="1.65" height="24.60" fill="#fff2c4"/><rect x="352.50" y="486.80" width="1.65" height="13.20" fill="#fbe3ea"/><rect x="352.50" y="462.20" width="1.65" height="24.60" fill="#fff2c4"/><rect x="356.35" y="487.70" width="1.65" height="12.30" fill="#fbe3ea"/><rect x="356.35" y="462.20" width="1.65" height="25.50" fill="#fff2c4"/><rect x="360.20" y="487.70" width="1.65" height="12.30" fill="#fbe3ea"/><rect x="360.20" y="462.20" width="1.65" height="25.50" fill="#fff2c4"/><rect x="364.05" y="486.20" width="1.65" height="13.80" fill="#fbe3ea"/><rect x="364.05" y="462.20" width="1.65" height="24.00" fill="#fff2c4"/><rect x="367.90" y="487.70" width="1.65" height="12.30" fill="#fbe3ea"/><rect x="367.90" y="462.20" width="1.65" height="25.50" fill="#fff2c4"/><rect x="371.75" y="487.70" width="1.65" height="12.30" fill="#fbe3ea"/><rect x="371.75" y="462.20" width="1.65" height="25.50" fill="#fff2c4"/><rect x="265.60" y="491.00" width="2.2" height="9.00" fill="#d8285a"/><rect x="265.60" y="466.70" width="2.2" height="24.30" fill="#f6c63a"/><rect x="269.45" y="489.50" width="2.2" height="10.50" fill="#d8285a"/><rect x="269.45" y="465.20" width="2.2" height="24.30" fill="#f6c63a"/><rect x="273.30" y="489.20" width="2.2" height="10.80" fill="#d8285a"/><rect x="273.30" y="464.30" width="2.2" height="24.90" fill="#f6c63a"/><rect x="277.15" y="489.80" width="2.2" height="10.20" fill="#d8285a"/><rect x="277.15" y="465.20" width="2.2" height="24.60" fill="#f6c63a"/><rect x="281.00" y="489.20" width="2.2" height="10.80" fill="#d8285a"/><rect x="281.00" y="464.30" width="2.2" height="24.90" fill="#f6c63a"/><rect x="284.85" y="488.30" width="2.2" height="11.70" fill="#d8285a"/><rect x="284.85" y="464.30" width="2.2" height="24.00" fill="#f6c63a"/><rect x="288.70" y="488.00" width="2.2" height="12.00" fill="#d8285a"/><rect x="288.70" y="463.70" width="2.2" height="24.30" fill="#f6c63a"/><rect x="292.55" y="488.30" width="2.2" height="11.70" fill="#d8285a"/><rect x="292.55" y="463.70" width="2.2" height="24.60" fill="#f6c63a"/><rect x="296.40" y="488.00" width="2.2" height="12.00" fill="#d8285a"/><rect x="296.40" y="463.20" width="2.2" height="24.80" fill="#f6c63a"/><rect x="300.25" y="488.00" width="2.2" height="12.00" fill="#d8285a"/><rect x="300.25" y="463.70" width="2.2" height="24.30" fill="#f6c63a"/><rect x="304.10" y="489.20" width="2.2" height="10.80" fill="#d8285a"/><rect x="304.10" y="463.70" width="2.2" height="25.50" fill="#f6c63a"/><rect x="307.95" y="487.70" width="2.2" height="12.30" fill="#d8285a"/><rect x="307.95" y="463.20" width="2.2" height="24.50" fill="#f6c63a"/><rect x="311.80" y="489.20" width="2.2" height="10.80" fill="#d8285a"/><rect x="311.80" y="463.70" width="2.2" height="25.50" fill="#f6c63a"/><rect x="315.65" y="487.70" width="2.2" height="12.30" fill="#d8285a"/><rect x="315.65" y="463.70" width="2.2" height="24.00" fill="#f6c63a"/><rect x="319.50" y="488.30" width="2.2" height="11.70" fill="#d8285a"/><rect x="319.50" y="463.70" width="2.2" height="24.60" fill="#f6c63a"/><rect x="323.35" y="488.30" width="2.2" height="11.70" fill="#d8285a"/><rect x="323.35" y="463.70" width="2.2" height="24.60" fill="#f6c63a"/><rect x="327.20" y="488.30" width="2.2" height="11.70" fill="#d8285a"/><rect x="327.20" y="463.70" width="2.2" height="24.60" fill="#f6c63a"/><rect x="331.05" y="488.00" width="2.2" height="12.00" fill="#d8285a"/><rect x="331.05" y="463.20" width="2.2" height="24.80" fill="#f6c63a"/><rect x="334.90" y="488.30" width="2.2" height="11.70" fill="#d8285a"/><rect x="334.90" y="463.70" width="2.2" height="24.60" fill="#f6c63a"/><rect x="338.75" y="487.70" width="2.2" height="12.30" fill="#d8285a"/><rect x="338.75" y="463.20" width="2.2" height="24.50" fill="#f6c63a"/><rect x="342.60" y="486.80" width="2.2" height="13.20" fill="#d8285a"/><rect x="342.60" y="461.70" width="2.2" height="25.10" fill="#f6c63a"/><rect x="346.45" y="486.80" width="2.2" height="13.20" fill="#d8285a"/><rect x="346.45" y="462.20" width="2.2" height="24.60" fill="#f6c63a"/><rect x="350.30" y="486.80" width="2.2" height="13.20" fill="#d8285a"/><rect x="350.30" y="462.20" width="2.2" height="24.60" fill="#f6c63a"/><rect x="354.15" y="485.70" width="2.2" height="14.30" fill="#d8285a"/><rect x="354.15" y="461.70" width="2.2" height="24.00" fill="#f6c63a"/><rect x="358.00" y="487.70" width="2.2" height="12.30" fill="#d8285a"/><rect x="358.00" y="462.20" width="2.2" height="25.50" fill="#f6c63a"/><rect x="361.85" y="486.20" width="2.2" height="13.80" fill="#d8285a"/><rect x="361.85" y="461.70" width="2.2" height="24.50" fill="#f6c63a"/><rect x="365.70" y="486.20" width="2.2" height="13.80" fill="#d8285a"/><rect x="365.70" y="462.20" width="2.2" height="24.00" fill="#f6c63a"/><rect x="369.55" y="487.70" width="2.2" height="12.30" fill="#d8285a"/><rect x="369.55" y="462.20" width="2.2" height="25.50" fill="#f6c63a"/><rect x="373.40" y="484.20" width="2.2" height="15.80" fill="#d8285a"/><rect x="373.40" y="459.50" width="2.2" height="24.70" fill="#f6c63a"/></svg>
<svg class="r" style="left:0;top:0" width="800" height="494"><rect x="469.90" y="490.20" width="1.69" height="9.80" fill="#fff2c4"/><rect x="469.90" y="472.70" width="1.69" height="17.50" fill="#e6f7fd"/><rect x="473.79" y="488.70" width="1.69" height="11.30" fill="#fff2c4"/><rect x="473.79" y="470.30" width="1.69" height="18.40" fill="#e6f7fd"/><rect x="477.68" y="488.70" width="1.69" height="11.30" fill="#fff2c4"/><rect x="477.68" y="470.30" width="1.69" height="18.40" fill="#e6f7fd"/><rect x="481.57" y="488.70" width="1.69" height="11.30" fill="#fff2c4"/><rect x="481.57" y="470.30" width="1.69" height="18.40" fill="#e6f7fd"/><rect x="485.46" y="488.70" width="1.69" height="11.30" fill="#fff2c4"/><rect x="485.46" y="470.30" width="1.69" height="18.40" fill="#e6f7fd"/><rect x="489.35" y="488.70" width="1.69" height="11.30" fill="#fff2c4"/><rect x="489.35" y="470.30" width="1.69" height="18.40" fill="#e6f7fd"/><rect x="493.24" y="488.00" width="1.69" height="12.00" fill="#fff2c4"/><rect x="493.24" y="470.00" width="1.69" height="18.00" fill="#e6f7fd"/><rect x="497.13" y="488.00" width="1.69" height="12.00" fill="#fff2c4"/><rect x="497.13" y="470.30" width="1.69" height="17.70" fill="#e6f7fd"/><rect x="501.02" y="488.00" width="1.69" height="12.00" fill="#fff2c4"/><rect x="501.02" y="470.30" width="1.69" height="17.70" fill="#e6f7fd"/><rect x="504.91" y="488.00" width="1.69" height="12.00" fill="#fff2c4"/><rect x="504.91" y="470.30" width="1.69" height="17.70" fill="#e6f7fd"/><rect x="508.80" y="488.00" width="1.69" height="12.00" fill="#fff2c4"/><rect x="508.80" y="470.00" width="1.69" height="18.00" fill="#e6f7fd"/><rect x="512.69" y="488.00" width="1.69" height="12.00" fill="#fff2c4"/><rect x="512.69" y="470.00" width="1.69" height="18.00" fill="#e6f7fd"/><rect x="516.58" y="488.00" width="1.69" height="12.00" fill="#fff2c4"/><rect x="516.58" y="470.00" width="1.69" height="18.00" fill="#e6f7fd"/><rect x="520.47" y="488.00" width="1.69" height="12.00" fill="#fff2c4"/><rect x="520.47" y="470.00" width="1.69" height="18.00" fill="#e6f7fd"/><rect x="524.36" y="488.00" width="1.69" height="12.00" fill="#fff2c4"/><rect x="524.36" y="470.00" width="1.69" height="18.00" fill="#e6f7fd"/><rect x="528.25" y="488.00" width="1.69" height="12.00" fill="#fff2c4"/><rect x="528.25" y="470.00" width="1.69" height="18.00" fill="#e6f7fd"/><rect x="532.14" y="488.00" width="1.69" height="12.00" fill="#fff2c4"/><rect x="532.14" y="470.00" width="1.69" height="18.00" fill="#e6f7fd"/><rect x="536.03" y="488.00" width="1.69" height="12.00" fill="#fff2c4"/><rect x="536.03" y="469.20" width="1.69" height="18.80" fill="#e6f7fd"/><rect x="539.92" y="488.00" width="1.69" height="12.00" fill="#fff2c4"/><rect x="539.92" y="469.20" width="1.69" height="18.80" fill="#e6f7fd"/><rect x="543.81" y="487.20" width="1.69" height="12.80" fill="#fff2c4"/><rect x="543.81" y="469.20" width="1.69" height="18.00" fill="#e6f7fd"/><rect x="547.70" y="487.20" width="1.69" height="12.80" fill="#fff2c4"/><rect x="547.70" y="469.20" width="1.69" height="18.00" fill="#e6f7fd"/><rect x="551.59" y="487.20" width="1.69" height="12.80" fill="#fff2c4"/><rect x="551.59" y="468.80" width="1.69" height="18.40" fill="#e6f7fd"/><rect x="555.48" y="487.20" width="1.69" height="12.80" fill="#fff2c4"/><rect x="555.48" y="469.20" width="1.69" height="18.00" fill="#e6f7fd"/><rect x="559.37" y="487.20" width="1.69" height="12.80" fill="#fff2c4"/><rect x="559.37" y="469.20" width="1.69" height="18.00" fill="#e6f7fd"/><rect x="563.26" y="487.20" width="1.69" height="12.80" fill="#fff2c4"/><rect x="563.26" y="468.80" width="1.69" height="18.40" fill="#e6f7fd"/><rect x="567.15" y="487.20" width="1.69" height="12.80" fill="#fff2c4"/><rect x="567.15" y="468.80" width="1.69" height="18.40" fill="#e6f7fd"/><rect x="571.04" y="487.20" width="1.69" height="12.80" fill="#fff2c4"/><rect x="571.04" y="468.80" width="1.69" height="18.40" fill="#e6f7fd"/><rect x="574.93" y="487.20" width="1.69" height="12.80" fill="#fff2c4"/><rect x="574.93" y="468.80" width="1.69" height="18.40" fill="#e6f7fd"/><rect x="467.70" y="490.20" width="2.2" height="9.80" fill="#f6c63a"/><rect x="467.70" y="472.70" width="2.2" height="17.50" fill="#7fd0f2"/><rect x="471.59" y="488.70" width="2.2" height="11.30" fill="#f6c63a"/><rect x="471.59" y="470.30" width="2.2" height="18.40" fill="#7fd0f2"/><rect x="475.48" y="488.70" width="2.2" height="11.30" fill="#f6c63a"/><rect x="475.48" y="470.30" width="2.2" height="18.40" fill="#7fd0f2"/><rect x="479.37" y="488.00" width="2.2" height="12.00" fill="#f6c63a"/><rect x="479.37" y="470.00" width="2.2" height="18.00" fill="#7fd0f2"/><rect x="483.26" y="488.70" width="2.2" height="11.30" fill="#f6c63a"/><rect x="483.26" y="470.30" width="2.2" height="18.40" fill="#7fd0f2"/><rect x="487.15" y="488.70" width="2.2" height="11.30" fill="#f6c63a"/><rect x="487.15" y="470.30" width="2.2" height="18.40" fill="#7fd0f2"/><rect x="491.04" y="488.00" width="2.2" height="12.00" fill="#f6c63a"/><rect x="491.04" y="470.00" width="2.2" height="18.00" fill="#7fd0f2"/><rect x="494.93" y="488.00" width="2.2" height="12.00" fill="#f6c63a"/><rect x="494.93" y="470.00" width="2.2" height="18.00" fill="#7fd0f2"/><rect x="498.82" y="488.00" width="2.2" height="12.00" fill="#f6c63a"/><rect x="498.82" y="470.30" width="2.2" height="17.70" fill="#7fd0f2"/><rect x="502.71" y="488.00" width="2.2" height="12.00" fill="#f6c63a"/><rect x="502.71" y="470.30" width="2.2" height="17.70" fill="#7fd0f2"/><rect x="506.60" y="488.00" width="2.2" height="12.00" fill="#f6c63a"/><rect x="506.60" y="469.20" width="2.2" height="18.80" fill="#7fd0f2"/><rect x="510.49" y="488.00" width="2.2" height="12.00" fill="#f6c63a"/><rect x="510.49" y="470.00" width="2.2" height="18.00" fill="#7fd0f2"/><rect x="514.38" y="488.00" width="2.2" height="12.00" fill="#f6c63a"/><rect x="514.38" y="470.00" width="2.2" height="18.00" fill="#7fd0f2"/><rect x="518.27" y="488.00" width="2.2" height="12.00" fill="#f6c63a"/><rect x="518.27" y="470.00" width="2.2" height="18.00" fill="#7fd0f2"/><rect x="522.16" y="488.00" width="2.2" height="12.00" fill="#f6c63a"/><rect x="522.16" y="470.00" width="2.2" height="18.00" fill="#7fd0f2"/><rect x="526.05" y="488.00" width="2.2" height="12.00" fill="#f6c63a"/><rect x="526.05" y="469.20" width="2.2" height="18.80" fill="#7fd0f2"/><rect x="529.94" y="488.00" width="2.2" height="12.00" fill="#f6c63a"/><rect x="529.94" y="470.00" width="2.2" height="18.00" fill="#7fd0f2"/><rect x="533.83" y="488.00" width="2.2" height="12.00" fill="#f6c63a"/><rect x="533.83" y="469.20" width="2.2" height="18.80" fill="#7fd0f2"/><rect x="537.72" y="488.00" width="2.2" height="12.00" fill="#f6c63a"/><rect x="537.72" y="469.20" width="2.2" height="18.80" fill="#7fd0f2"/><rect x="541.61" y="487.20" width="2.2" height="12.80" fill="#f6c63a"/><rect x="541.61" y="469.20" width="2.2" height="18.00" fill="#7fd0f2"/><rect x="545.50" y="487.20" width="2.2" height="12.80" fill="#f6c63a"/><rect x="545.50" y="469.20" width="2.2" height="18.00" fill="#7fd0f2"/><rect x="549.39" y="487.20" width="2.2" height="12.80" fill="#f6c63a"/><rect x="549.39" y="468.80" width="2.2" height="18.40" fill="#7fd0f2"/><rect x="553.28" y="487.20" width="2.2" height="12.80" fill="#f6c63a"/><rect x="553.28" y="468.80" width="2.2" height="18.40" fill="#7fd0f2"/><rect x="557.17" y="487.20" width="2.2" height="12.80" fill="#f6c63a"/><rect x="557.17" y="469.20" width="2.2" height="18.00" fill="#7fd0f2"/><rect x="561.06" y="487.20" width="2.2" height="12.80" fill="#f6c63a"/><rect x="561.06" y="468.80" width="2.2" height="18.40" fill="#7fd0f2"/><rect x="564.95" y="487.20" width="2.2" height="12.80" fill="#f6c63a"/><rect x="564.95" y="468.80" width="2.2" height="18.40" fill="#7fd0f2"/><rect x="568.84" y="487.20" width="2.2" height="12.80" fill="#f6c63a"/><rect x="568.84" y="468.80" width="2.2" height="18.40" fill="#7fd0f2"/><rect x="572.73" y="487.20" width="2.2" height="12.80" fill="#f6c63a"/><rect x="572.73" y="468.80" width="2.2" height="18.40" fill="#7fd0f2"/><rect x="576.62" y="485.00" width="2.2" height="15.00" fill="#f6c63a"/><rect x="576.62" y="466.20" width="2.2" height="18.80" fill="#7fd0f2"/></svg>
<svg class="r" style="left:0;top:0" width="800" height="494"><rect x="671.10" y="480.70" width="1.45" height="19.30" fill="#fff2c4"/><rect x="671.10" y="460.70" width="1.45" height="20.00" fill="#e6f7fd"/><rect x="674.85" y="478.70" width="1.45" height="21.30" fill="#fff2c4"/><rect x="674.85" y="455.20" width="1.45" height="23.50" fill="#e6f7fd"/><rect x="678.60" y="478.00" width="1.45" height="22.00" fill="#fff2c4"/><rect x="678.60" y="452.80" width="1.45" height="25.20" fill="#e6f7fd"/><rect x="682.35" y="478.00" width="1.45" height="22.00" fill="#fff2c4"/><rect x="682.35" y="451.70" width="1.45" height="26.30" fill="#e6f7fd"/><rect x="686.10" y="478.00" width="1.45" height="22.00" fill="#fff2c4"/><rect x="686.10" y="451.30" width="1.45" height="26.70" fill="#e6f7fd"/><rect x="689.85" y="478.00" width="1.45" height="22.00" fill="#fff2c4"/><rect x="689.85" y="451.30" width="1.45" height="26.70" fill="#e6f7fd"/><rect x="693.60" y="478.00" width="1.45" height="22.00" fill="#fff2c4"/><rect x="693.60" y="450.70" width="1.45" height="27.30" fill="#e6f7fd"/><rect x="697.35" y="478.00" width="1.45" height="22.00" fill="#fff2c4"/><rect x="697.35" y="450.70" width="1.45" height="27.30" fill="#e6f7fd"/><rect x="701.10" y="478.00" width="1.45" height="22.00" fill="#fff2c4"/><rect x="701.10" y="450.70" width="1.45" height="27.30" fill="#e6f7fd"/><rect x="704.85" y="478.00" width="1.45" height="22.00" fill="#fff2c4"/><rect x="704.85" y="450.70" width="1.45" height="27.30" fill="#e6f7fd"/><rect x="708.60" y="478.00" width="1.45" height="22.00" fill="#fff2c4"/><rect x="708.60" y="450.70" width="1.45" height="27.30" fill="#e6f7fd"/><rect x="712.35" y="478.00" width="1.45" height="22.00" fill="#fff2c4"/><rect x="712.35" y="450.70" width="1.45" height="27.30" fill="#e6f7fd"/><rect x="716.10" y="478.00" width="1.45" height="22.00" fill="#fff2c4"/><rect x="716.10" y="450.70" width="1.45" height="27.30" fill="#e6f7fd"/><rect x="719.85" y="478.00" width="1.45" height="22.00" fill="#fff2c4"/><rect x="719.85" y="450.70" width="1.45" height="27.30" fill="#e6f7fd"/><rect x="723.60" y="478.00" width="1.45" height="22.00" fill="#fff2c4"/><rect x="723.60" y="450.70" width="1.45" height="27.30" fill="#e6f7fd"/><rect x="727.35" y="478.00" width="1.45" height="22.00" fill="#fff2c4"/><rect x="727.35" y="450.70" width="1.45" height="27.30" fill="#e6f7fd"/><rect x="731.10" y="478.00" width="1.45" height="22.00" fill="#fff2c4"/><rect x="731.10" y="450.70" width="1.45" height="27.30" fill="#e6f7fd"/><rect x="734.85" y="478.00" width="1.45" height="22.00" fill="#fff2c4"/><rect x="734.85" y="450.70" width="1.45" height="27.30" fill="#e6f7fd"/><rect x="738.60" y="478.00" width="1.45" height="22.00" fill="#fff2c4"/><rect x="738.60" y="450.70" width="1.45" height="27.30" fill="#e6f7fd"/><rect x="742.35" y="478.00" width="1.45" height="22.00" fill="#fff2c4"/><rect x="742.35" y="450.70" width="1.45" height="27.30" fill="#e6f7fd"/><rect x="746.10" y="478.00" width="1.45" height="22.00" fill="#fff2c4"/><rect x="746.10" y="450.70" width="1.45" height="27.30" fill="#e6f7fd"/><rect x="749.85" y="478.00" width="1.45" height="22.00" fill="#fff2c4"/><rect x="749.85" y="450.70" width="1.45" height="27.30" fill="#e6f7fd"/><rect x="753.60" y="478.00" width="1.45" height="22.00" fill="#fff2c4"/><rect x="753.60" y="450.70" width="1.45" height="27.30" fill="#e6f7fd"/><rect x="757.35" y="478.00" width="1.45" height="22.00" fill="#fff2c4"/><rect x="757.35" y="450.70" width="1.45" height="27.30" fill="#e6f7fd"/><rect x="761.10" y="478.00" width="1.45" height="22.00" fill="#fff2c4"/><rect x="761.10" y="450.70" width="1.45" height="27.30" fill="#e6f7fd"/><rect x="764.85" y="478.00" width="1.45" height="22.00" fill="#fff2c4"/><rect x="764.85" y="450.70" width="1.45" height="27.30" fill="#e6f7fd"/><rect x="768.60" y="478.00" width="1.45" height="22.00" fill="#fff2c4"/><rect x="768.60" y="450.70" width="1.45" height="27.30" fill="#e6f7fd"/><rect x="772.35" y="478.00" width="1.45" height="22.00" fill="#fff2c4"/><rect x="772.35" y="450.70" width="1.45" height="27.30" fill="#e6f7fd"/><rect x="668.80" y="480.70" width="2.3" height="19.30" fill="#f6c63a"/><rect x="668.80" y="460.70" width="2.3" height="20.00" fill="#7fd0f2"/><rect x="672.55" y="478.70" width="2.3" height="21.30" fill="#f6c63a"/><rect x="672.55" y="455.20" width="2.3" height="23.50" fill="#7fd0f2"/><rect x="676.30" y="478.00" width="2.3" height="22.00" fill="#f6c63a"/><rect x="676.30" y="452.80" width="2.3" height="25.20" fill="#7fd0f2"/><rect x="680.05" y="478.00" width="2.3" height="22.00" fill="#f6c63a"/><rect x="680.05" y="451.70" width="2.3" height="26.30" fill="#7fd0f2"/><rect x="683.80" y="478.00" width="2.3" height="22.00" fill="#f6c63a"/><rect x="683.80" y="451.30" width="2.3" height="26.70" fill="#7fd0f2"/><rect x="687.55" y="478.00" width="2.3" height="22.00" fill="#f6c63a"/><rect x="687.55" y="451.30" width="2.3" height="26.70" fill="#7fd0f2"/><rect x="691.30" y="478.00" width="2.3" height="22.00" fill="#f6c63a"/><rect x="691.30" y="450.70" width="2.3" height="27.30" fill="#7fd0f2"/><rect x="695.05" y="478.00" width="2.3" height="22.00" fill="#f6c63a"/><rect x="695.05" y="450.70" width="2.3" height="27.30" fill="#7fd0f2"/><rect x="698.80" y="478.00" width="2.3" height="22.00" fill="#f6c63a"/><rect x="698.80" y="450.70" width="2.3" height="27.30" fill="#7fd0f2"/><rect x="702.55" y="478.00" width="2.3" height="22.00" fill="#f6c63a"/><rect x="702.55" y="450.70" width="2.3" height="27.30" fill="#7fd0f2"/><rect x="706.30" y="478.00" width="2.3" height="22.00" fill="#f6c63a"/><rect x="706.30" y="450.70" width="2.3" height="27.30" fill="#7fd0f2"/><rect x="710.05" y="478.00" width="2.3" height="22.00" fill="#f6c63a"/><rect x="710.05" y="450.70" width="2.3" height="27.30" fill="#7fd0f2"/><rect x="713.80" y="478.00" width="2.3" height="22.00" fill="#f6c63a"/><rect x="713.80" y="450.70" width="2.3" height="27.30" fill="#7fd0f2"/><rect x="717.55" y="478.00" width="2.3" height="22.00" fill="#f6c63a"/><rect x="717.55" y="450.70" width="2.3" height="27.30" fill="#7fd0f2"/><rect x="721.30" y="478.00" width="2.3" height="22.00" fill="#f6c63a"/><rect x="721.30" y="450.70" width="2.3" height="27.30" fill="#7fd0f2"/><rect x="725.05" y="478.00" width="2.3" height="22.00" fill="#f6c63a"/><rect x="725.05" y="450.70" width="2.3" height="27.30" fill="#7fd0f2"/><rect x="728.80" y="478.00" width="2.3" height="22.00" fill="#f6c63a"/><rect x="728.80" y="450.70" width="2.3" height="27.30" fill="#7fd0f2"/><rect x="732.55" y="478.00" width="2.3" height="22.00" fill="#f6c63a"/><rect x="732.55" y="450.70" width="2.3" height="27.30" fill="#7fd0f2"/><rect x="736.30" y="478.00" width="2.3" height="22.00" fill="#f6c63a"/><rect x="736.30" y="450.70" width="2.3" height="27.30" fill="#7fd0f2"/><rect x="740.05" y="478.00" width="2.3" height="22.00" fill="#f6c63a"/><rect x="740.05" y="450.70" width="2.3" height="27.30" fill="#7fd0f2"/><rect x="743.80" y="478.00" width="2.3" height="22.00" fill="#f6c63a"/><rect x="743.80" y="450.70" width="2.3" height="27.30" fill="#7fd0f2"/><rect x="747.55" y="478.00" width="2.3" height="22.00" fill="#f6c63a"/><rect x="747.55" y="450.70" width="2.3" height="27.30" fill="#7fd0f2"/><rect x="751.30" y="478.00" width="2.3" height="22.00" fill="#f6c63a"/><rect x="751.30" y="450.70" width="2.3" height="27.30" fill="#7fd0f2"/><rect x="755.05" y="478.00" width="2.3" height="22.00" fill="#f6c63a"/><rect x="755.05" y="450.70" width="2.3" height="27.30" fill="#7fd0f2"/><rect x="758.80" y="478.00" width="2.3" height="22.00" fill="#f6c63a"/><rect x="758.80" y="450.70" width="2.3" height="27.30" fill="#7fd0f2"/><rect x="762.55" y="478.00" width="2.3" height="22.00" fill="#f6c63a"/><rect x="762.55" y="450.70" width="2.3" height="27.30" fill="#7fd0f2"/><rect x="766.30" y="478.00" width="2.3" height="22.00" fill="#f6c63a"/><rect x="766.30" y="450.70" width="2.3" height="27.30" fill="#7fd0f2"/><rect x="770.05" y="478.00" width="2.3" height="22.00" fill="#f6c63a"/><rect x="770.05" y="450.70" width="2.3" height="27.30" fill="#7fd0f2"/><rect x="773.80" y="478.00" width="2.3" height="22.00" fill="#f6c63a"/><rect x="773.80" y="450.70" width="2.3" height="27.30" fill="#7fd0f2"/></svg>
<div class="r" style="left:0;top:65.8px;width:6px;height:68.7px;background:linear-gradient(90deg,#ededed,#f5f5f5 70%,#fafafa)"></div>
<div class="r" style="left:0;top:135.7px;width:6px;height:358px;background:linear-gradient(90deg,#e3e3e3,#ededed 70%,#f3f3f3)"></div>
<div class="r" style="left:796.6px;top:65.2px;width:1px;height:429px;background:#c8c8c8;"></div>
<div class="r" style="left:797.6px;top:65.2px;width:2.4px;height:429px;background:#f0f0f0;"></div>
<svg class="r" style="left:0;top:0" width="800" height="494"><path d="M493.8,419.2 L493.8,427.6 L495.8,425.7 L497.5,429.6 L499.1,428.9 L497.4,425.1 L500.1,425 Z" fill="#111" stroke="#fff" stroke-width="0.6" stroke-linejoin="round"/></svg>
<div class="r" style="left:0;top:493px;width:800px;height:1px;background:rgba(60,60,60,0.55)"></div>
</body></html>
